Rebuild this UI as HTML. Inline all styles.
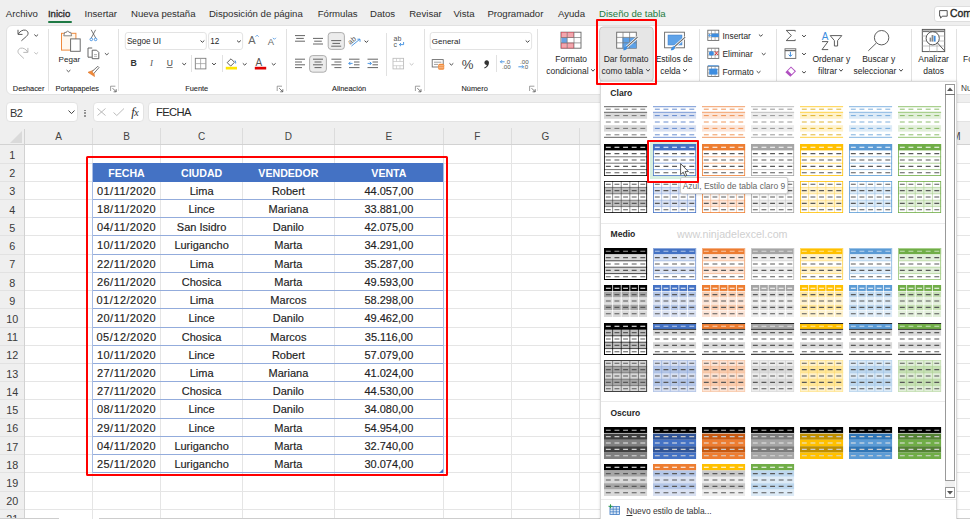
<!DOCTYPE html>
<html><head><meta charset="utf-8"><style>
html,body{margin:0;padding:0}
body{width:970px;height:519px;overflow:hidden;position:relative;background:#efefef;font-family:"Liberation Sans",sans-serif}
.t{position:absolute;line-height:1;white-space:nowrap}
.c{width:300px;text-align:center}
.r{position:absolute}
svg.r{overflow:visible}
</style></head><body>
<div class="t" style="left:5.8px;top:9.17px;font-size:9.6px;color:#2e2e2e;font-weight:normal;">Archivo</div><div class="t" style="left:47.9px;top:9.17px;font-size:9.6px;color:#1f1f1f;font-weight:normal;-webkit-text-stroke:0.3px #262626">Inicio</div><div class="t" style="left:84.5px;top:9.17px;font-size:9.6px;color:#2e2e2e;font-weight:normal;">Insertar</div><div class="t" style="left:131.0px;top:9.17px;font-size:9.6px;color:#2e2e2e;font-weight:normal;">Nueva pestaña</div><div class="t" style="left:208.9px;top:9.17px;font-size:9.6px;color:#2e2e2e;font-weight:normal;">Disposición de página</div><div class="t" style="left:317.7px;top:9.17px;font-size:9.6px;color:#2e2e2e;font-weight:normal;">Fórmulas</div><div class="t" style="left:370.0px;top:9.17px;font-size:9.6px;color:#2e2e2e;font-weight:normal;">Datos</div><div class="t" style="left:409.2px;top:9.17px;font-size:9.6px;color:#2e2e2e;font-weight:normal;">Revisar</div><div class="t" style="left:453.4px;top:9.17px;font-size:9.6px;color:#2e2e2e;font-weight:normal;">Vista</div><div class="t" style="left:487.4px;top:9.17px;font-size:9.6px;color:#2e2e2e;font-weight:normal;">Programador</div><div class="t" style="left:558.0px;top:9.17px;font-size:9.6px;color:#2e2e2e;font-weight:normal;">Ayuda</div><div class="t" style="left:599.0px;top:9.17px;font-size:9.6px;color:#1b7b3e;font-weight:normal;">Diseño de tabla</div><div class="r" style="left:48px;top:21px;width:24px;height:1.6px;background:#1f7a45;border-radius:1px"></div><div class="r" style="left:933.5px;top:5.5px;width:60px;height:16.5px;background:#fff;border:1px solid #dedede;border-radius:3px;box-sizing:border-box"></div><svg class="r" style="left:939px;top:10px" width="9" height="9" viewBox="0 0 9 9"><path d="M0.6 0.6H8.2V6.2H3.2L1.6 8.2V6.2H0.6Z" fill="none" stroke="#444" stroke-width="0.9"/></svg><div class="t" style="left:950.0px;top:8.80px;font-size:10.4px;color:#262626;font-weight:normal;-webkit-text-stroke:0.35px #262626">Com</div><div class="r" style="left:6px;top:24.5px;width:990px;height:70px;background:#fff;border:1px solid #e2e2e2;border-radius:6px;box-sizing:border-box"></div><div class="r" style="left:48px;top:28.5px;width:1px;height:62px;background:#e1e1e1"></div><div class="r" style="left:118.3px;top:28.5px;width:1px;height:62px;background:#e1e1e1"></div><div class="r" style="left:285.5px;top:28.5px;width:1px;height:62px;background:#e1e1e1"></div><div class="r" style="left:423.6px;top:28.5px;width:1px;height:62px;background:#e1e1e1"></div><div class="r" style="left:537.4px;top:28.5px;width:1px;height:62px;background:#e1e1e1"></div><div class="r" style="left:699px;top:28.5px;width:1px;height:62px;background:#e1e1e1"></div><div class="r" style="left:775.7px;top:28.5px;width:1px;height:62px;background:#e1e1e1"></div><div class="r" style="left:910.8px;top:28.5px;width:1px;height:62px;background:#e1e1e1"></div><div class="r" style="left:956px;top:28.5px;width:1px;height:62px;background:#e1e1e1"></div><div class="r" style="left:190.6px;top:55px;width:1px;height:17px;background:#e1e1e1"></div><div class="r" style="left:221.7px;top:55px;width:1px;height:17px;background:#e1e1e1"></div><div class="r" style="left:495.5px;top:55px;width:1px;height:17px;background:#e1e1e1"></div><div class="r" style="left:385.5px;top:32.5px;width:1px;height:43px;background:#e1e1e1"></div><div class="t" style="left:12.8px;top:84.74px;font-size:7.4px;color:#262626;font-weight:normal;-webkit-text-stroke:0.1px #262626">Deshacer</div><div class="t" style="left:55.5px;top:84.74px;font-size:7.4px;color:#262626;font-weight:normal;-webkit-text-stroke:0.1px #262626">Portapapeles</div><div class="t" style="left:185.2px;top:84.74px;font-size:7.4px;color:#262626;font-weight:normal;-webkit-text-stroke:0.1px #262626">Fuente</div><div class="t" style="left:332.0px;top:84.74px;font-size:7.4px;color:#262626;font-weight:normal;-webkit-text-stroke:0.1px #262626">Alineación</div><div class="t" style="left:461.5px;top:84.74px;font-size:7.4px;color:#262626;font-weight:normal;-webkit-text-stroke:0.1px #262626">Número</div><div class="t" style="left:961.0px;top:84.37px;font-size:8.3px;color:#3d3d3d;font-weight:normal;">Nu</div><svg class="r" style="left:0;top:0" width="970" height="100" viewBox="0 0 970 100"><path d="M18.3 34 C20 31, 23 29.6, 25.5 30.2 C28.6 31.1, 28.8 34.4, 26.6 36.2 L21.4 40.8" fill="none" stroke="#505050" stroke-width="0.95"/><path d="M18 29.8V34.4H22.5" fill="none" stroke="#505050" stroke-width="0.95"/><path d="M34.30 34.55L36.20 36.25L38.10 34.55" fill="none" stroke="#505050" stroke-width="1.0"/><path d="M27.6 52 C26 49, 23 47.6, 20.6 48.2 C17.6 49.2, 17.2 52.3, 19.3 54.2 L23.9 58.5" fill="none" stroke="#b5b5b5" stroke-width="0.95"/><path d="M27.9 47.9V52.4H23.3" fill="none" stroke="#b5b5b5" stroke-width="0.95"/><path d="M34.30 52.35L36.20 54.05L38.10 52.35" fill="none" stroke="#c0c0c0" stroke-width="1.0"/><rect x="61.5" y="33.3" width="14.4" height="16.8" fill="#fff8ee" stroke="#ee8a3c" stroke-width="1"/><path d="M63.8 35.8L64.6 32.4H66.4A1.3 1.3 0 0 1 69 32.4H70.8L71.6 35.8Z" fill="#fff" stroke="#777" stroke-width="0.9"/><rect x="70.6" y="38.9" width="9.6" height="12.4" fill="#fff" stroke="#666" stroke-width="0.95"/><path d="M66.60 70.05L68.50 71.75L70.40 70.05" fill="none" stroke="#555" stroke-width="1.0"/><path d="M91.2 29.8L95.8 38.2M95.6 29.8L91.2 38.2" stroke="#555" stroke-width="0.8"/><circle cx="91.3" cy="39.4" r="1.3" fill="none" stroke="#3d8de0" stroke-width="0.9"/><circle cx="95.6" cy="39.4" r="1.3" fill="none" stroke="#3d8de0" stroke-width="0.9"/><path d="M91.8 57.2H88V48H92.2" fill="none" stroke="#555" stroke-width="0.9"/><path d="M92.2 50.2H96.6L98.8 52.4V58.7H92.2Z" fill="#fff" stroke="#555" stroke-width="0.9"/><path d="M94 54.5H97M94 56.3H97" stroke="#888" stroke-width="0.6"/><path d="M104.90 53.15L106.80 54.85L108.70 53.15" fill="none" stroke="#555" stroke-width="1.0"/><path d="M88 72.3L93.6 70.2L94.5 76.5Z" fill="#f08a3a" stroke="#e07020" stroke-width="0.6"/><path d="M92.2 71.4L97.8 66.3L99 67.6L93.9 73.4" fill="#fff" stroke="#555" stroke-width="0.8"/><rect x="125.3" y="32.5" width="81" height="17" rx="2.5" fill="#fff" stroke="#e0e0e0" stroke-width="0.9"/><path d="M200.50 40.55L202.40 42.25L204.30 40.55" fill="none" stroke="#444" stroke-width="1.0"/><rect x="208.6" y="32.5" width="34" height="17" rx="2.5" fill="#fff" stroke="#e0e0e0" stroke-width="0.9"/><path d="M237.00 40.55L238.90 42.25L240.80 40.55" fill="none" stroke="#444" stroke-width="1.0"/><path d="M256.4 33.8L257.8 35.2M257.8 33.8" stroke="#3d8de0" stroke-width="0" /><path d="M255.6 36.7L257.1 35.2L258.6 36.7" fill="none" stroke="#3d8de0" stroke-width="0.8"/><path d="M272.9 37.8L274.4 39.3L275.9 37.8" fill="none" stroke="#3d8de0" stroke-width="0.8"/><path d="M182.30 63.15L184.20 64.85L186.10 63.15" fill="none" stroke="#444" stroke-width="1.0"/><path d="M166.6 67.5H172.6" stroke="#444" stroke-width="0.7"/><rect x="195.3" y="58.3" width="10.6" height="10.6" fill="none" stroke="#777" stroke-width="0.85"/><path d="M200.6 58.3V68.9M195.3 63.6H205.9" stroke="#999" stroke-width="0.7"/><path d="M212.10 63.15L214.00 64.85L215.90 63.15" fill="none" stroke="#444" stroke-width="1.0"/><path d="M227.2 62.6L231 58.8L234.5 62.3L230.7 66.1Z" fill="#fff" stroke="#444" stroke-width="0.85"/><path d="M235 60.5 q1.2 1.6 0.6 3" fill="none" stroke="#3d8de0" stroke-width="0.9"/><rect x="225.8" y="66.8" width="11.2" height="2.7" fill="#ffe600"/><path d="M242.80 63.35L244.70 65.05L246.60 63.35" fill="none" stroke="#444" stroke-width="1.0"/><rect x="254.8" y="66.8" width="11.4" height="2.7" fill="#e00000"/><path d="M271.80 63.35L273.70 65.05L275.60 63.35" fill="none" stroke="#444" stroke-width="1.0"/><path d="M110.6 91V86.2H115.39999999999999" fill="none" stroke="#777" stroke-width="0.7"/><path d="M112.6 88.2L116.19999999999999 91.8M116.19999999999999 89.2V91.8H113.6" fill="none" stroke="#555" stroke-width="0.8"/><path d="M277.2 91V86.2H282.0" fill="none" stroke="#777" stroke-width="0.7"/><path d="M279.2 88.2L282.8 91.8M282.8 89.2V91.8H280.2" fill="none" stroke="#555" stroke-width="0.8"/><path d="M415.4 91V86.2H420.2" fill="none" stroke="#777" stroke-width="0.7"/><path d="M417.4 88.2L421.0 91.8M421.0 89.2V91.8H418.4" fill="none" stroke="#555" stroke-width="0.8"/><path d="M529.6 91V86.2H534.4" fill="none" stroke="#777" stroke-width="0.7"/><path d="M531.6 88.2L535.2 91.8M535.2 89.2V91.8H532.6" fill="none" stroke="#555" stroke-width="0.8"/><path d="M295.00 35.60h10.00" stroke="#555" stroke-width="0.9"/><path d="M296.20 38.40h7.60" stroke="#555" stroke-width="0.9"/><path d="M295.00 41.20h10.00" stroke="#555" stroke-width="0.9"/><path d="M313.00 38.40h10.00" stroke="#555" stroke-width="0.9"/><path d="M314.20 41.20h7.60" stroke="#555" stroke-width="0.9"/><path d="M313.00 44.00h10.00" stroke="#555" stroke-width="0.9"/><rect x="328.2" y="32.6" width="16.2" height="16.8" rx="3" fill="#ececec" stroke="#9a9a9a" stroke-width="0.8"/><path d="M331.20 40.60h10.00" stroke="#555" stroke-width="0.9"/><path d="M332.40 43.40h7.60" stroke="#555" stroke-width="0.9"/><path d="M331.20 46.20h10.00" stroke="#555" stroke-width="0.9"/><text x="348.2" y="43" font-size="7.4" fill="#555" font-family="Liberation Sans" transform="rotate(-40 352 41)">ab</text><path d="M351.5 46L359.8 39.2M357.4 39.2H360V41.8" fill="none" stroke="#3d8de0" stroke-width="0.9"/><path d="M364.50 40.65L366.40 42.35L368.30 40.65" fill="none" stroke="#444" stroke-width="1.0"/><path d="M295.00 59.20h10.00" stroke="#555" stroke-width="0.9"/><path d="M295.00 62.00h7.00" stroke="#555" stroke-width="0.9"/><path d="M295.00 64.80h10.00" stroke="#555" stroke-width="0.9"/><path d="M295.00 67.60h7.00" stroke="#555" stroke-width="0.9"/><rect x="309.6" y="55.6" width="16.8" height="16.6" rx="3" fill="#ececec" stroke="#9a9a9a" stroke-width="0.8"/><path d="M313.00 59.20h10.00" stroke="#555" stroke-width="0.9"/><path d="M314.50 62.00h7.00" stroke="#555" stroke-width="0.9"/><path d="M313.00 64.80h10.00" stroke="#555" stroke-width="0.9"/><path d="M314.50 67.60h7.00" stroke="#555" stroke-width="0.9"/><path d="M331.40 59.20h10.00" stroke="#555" stroke-width="0.9"/><path d="M334.40 62.00h7.00" stroke="#555" stroke-width="0.9"/><path d="M331.40 64.80h10.00" stroke="#555" stroke-width="0.9"/><path d="M334.40 67.60h7.00" stroke="#555" stroke-width="0.9"/><path d="M349.00 59.20h10.50" stroke="#555" stroke-width="0.9"/><path d="M354.00 62.00h5.50" stroke="#555" stroke-width="0.9"/><path d="M354.00 64.80h5.50" stroke="#555" stroke-width="0.9"/><path d="M349.00 67.60h10.50" stroke="#555" stroke-width="0.9"/><path d="M352.6 63.4H348.8M350.4 61.8L348.8 63.4L350.4 65" fill="none" stroke="#3d8de0" stroke-width="0.9"/><path d="M367.50 59.20h10.50" stroke="#555" stroke-width="0.9"/><path d="M372.50 62.00h5.50" stroke="#555" stroke-width="0.9"/><path d="M372.50 64.80h5.50" stroke="#555" stroke-width="0.9"/><path d="M367.50 67.60h10.50" stroke="#555" stroke-width="0.9"/><path d="M367.6 63.4H371.4M369.8 61.8L371.4 63.4L369.8 65" fill="none" stroke="#3d8de0" stroke-width="0.9"/><text x="393.6" y="41.2" font-size="7" fill="#555" font-family="Liberation Sans">ab</text><text x="393.6" y="46.8" font-size="7" fill="#555" font-family="Liberation Sans">c</text><path d="M403.6 42V44.6H399.4M401 43L399.4 44.6L401 46.2" fill="none" stroke="#3d8de0" stroke-width="0.9"/><rect x="393" y="58.3" width="10.6" height="10.6" fill="none" stroke="#bbb" stroke-width="0.85"/><path d="M393 61.5H403.6M393 65.7H403.6M396.5 58.3V61.5M400 58.3V61.5M396.5 65.7V68.9M400 65.7V68.9" stroke="#c4c4c4" stroke-width="0.7"/><path d="M409.70 63.35L411.60 65.05L413.50 63.35" fill="none" stroke="#c4c4c4" stroke-width="1.0"/><rect x="430.2" y="32.5" width="101.4" height="17" rx="2.5" fill="#fff" stroke="#e0e0e0" stroke-width="0.9"/><path d="M525.70 40.55L527.60 42.25L529.50 40.55" fill="none" stroke="#444" stroke-width="1.0"/><rect x="432.2" y="59.6" width="11" height="7.4" fill="#fff" stroke="#666" stroke-width="0.85"/><path d="M434 62.2H441.4M434 64.4H438" stroke="#777" stroke-width="0.7"/><rect x="438.2" y="63.8" width="6" height="6" rx="1.5" fill="#f08a3a"/><path d="M438.8 65.8H443.6M438.8 67.8H443.6" stroke="#fff" stroke-width="0.5"/><path d="M449.50 63.35L451.40 65.05L453.30 63.35" fill="none" stroke="#444" stroke-width="1.0"/><text x="505" y="63.8" font-size="6.2" fill="#555" font-family="Liberation Sans">.0</text><text x="502" y="69" font-size="6.2" fill="#555" font-family="Liberation Sans">.00</text><path d="M504.6 61.8H500.4M501.9 60.3L500.4 61.8L501.9 63.3" fill="none" stroke="#3d8de0" stroke-width="0.9"/><text x="520" y="63.8" font-size="6.2" fill="#555" font-family="Liberation Sans">.00</text><text x="523" y="69" font-size="6.2" fill="#555" font-family="Liberation Sans">.0</text><path d="M518.4 66.8H523.6M522.1 65.3L523.6 66.8L522.1 68.3" fill="none" stroke="#3d8de0" stroke-width="0.9"/><rect x="561" y="32.2" width="20" height="16" fill="#fff" stroke="#666" stroke-width="0.9"/><rect x="561.5" y="32.6" width="12.2" height="5" fill="#f4a6ad" stroke="#e05060" stroke-width="0.6"/><rect x="561.5" y="43" width="12.2" height="5" fill="#f4a6ad" stroke="#e05060" stroke-width="0.6"/><rect x="561.5" y="37.8" width="5.6" height="5.2" fill="#6aa4e4"/><path d="M561 37.5H581M561 42.9H581M567.2 32.2V48.2M574 32.2V48.2" stroke="#777" stroke-width="0.7"/><rect x="599.6" y="27" width="53.6" height="54.5" rx="3.5" fill="#e6e6e6" stroke="#c4c4c4" stroke-width="0.9"/><rect x="616.7" y="32.2" width="19.6" height="16" fill="#fff" stroke="#666" stroke-width="0.9"/><rect x="622.4" y="37.4" width="14" height="10.8" fill="#5ea2e8"/><path d="M616.7 37.4H636.3M616.7 42.8H636.3M623 32.2V48.2M629.6 32.2V48.2" stroke="#777" stroke-width="0.7"/><path d="M637.6 37.2L626.2 47.4" stroke="#fff" stroke-width="2.6"/><path d="M637.6 37.2L626.2 47.4" stroke="#666" stroke-width="1.1"/><path d="M627.4 46.2C624.6 45.8 623.6 48 623.2 50.2C625.6 50.4 627.8 49.4 627.4 46.2Z" fill="#3d8de0"/><rect x="664.6" y="32.2" width="19.8" height="15.6" fill="#fff" stroke="#666" stroke-width="0.9"/><rect x="668" y="35" width="14" height="10" fill="#5ea2e8" stroke="#3d7cc8" stroke-width="0.5"/><path d="M685.2 37.2L673.8 47.4" stroke="#fff" stroke-width="2.6"/><path d="M685.2 37.2L673.8 47.4" stroke="#666" stroke-width="1.1"/><path d="M675 46.2C672.2 45.8 671.2 48 670.8 50.2C673.2 50.4 675.4 49.4 675 46.2Z" fill="#3d8de0"/><rect x="707.8" y="30.2" width="11" height="10.2" fill="#fff" stroke="#666" stroke-width="0.85"/><path d="M707.8 33.6H718.8M707.8 37.0H718.8M711.5 30.2V40.4M715.1 30.2V40.4" stroke="#888" stroke-width="0.6"/><rect x="711.5" y="33.6" width="7.3" height="3.4" fill="#3d8de0"/><path d="M713 35.3H708.6M710 34.0L708.6 35.3L710 36.6" fill="none" stroke="#3d8de0" stroke-width="0.9"/><rect x="707.8" y="48.2" width="11" height="10.2" fill="#fff" stroke="#666" stroke-width="0.85"/><path d="M707.8 51.6H718.8M707.8 55.0H718.8M711.5 48.2V58.400000000000006M715.1 48.2V58.400000000000006" stroke="#888" stroke-width="0.6"/><rect x="709" y="51.2" width="4.8" height="4.4" rx="1.5" fill="#3d8de0"/><path d="M715 51.400000000000006L718 55.0M718 51.400000000000006L715 55.0" stroke="#e02020" stroke-width="0.9"/><rect x="707.8" y="66.2" width="11" height="10.2" fill="#fff" stroke="#666" stroke-width="0.85"/><path d="M707.8 69.60000000000001H718.8M707.8 73.0H718.8M711.5 66.2V76.4M715.1 66.2V76.4" stroke="#888" stroke-width="0.6"/><rect x="709.2" y="68.60000000000001" width="8.2" height="6" fill="#3d8de0"/><path d="M708 65.8H718.6" stroke="#3d8de0" stroke-width="0.9"/><path d="M758.90 34.55L760.80 36.25L762.70 34.55" fill="none" stroke="#444" stroke-width="1.0"/><path d="M761.80 53.15L763.70 54.85L765.60 53.15" fill="none" stroke="#444" stroke-width="1.0"/><path d="M756.70 71.15L758.60 72.85L760.50 71.15" fill="none" stroke="#444" stroke-width="1.0"/><path d="M795.2 31.6V30.4H786.2L791.4 35.5L786.2 40.6H795.2V39.4" fill="none" stroke="#555" stroke-width="0.95"/><path d="M802.10 35.15L804.00 36.85L805.90 35.15" fill="none" stroke="#444" stroke-width="1.0"/><rect x="785" y="48.8" width="10.8" height="9.6" fill="#fff" stroke="#666" stroke-width="0.9"/><path d="M785 50.6H795.8" stroke="#666" stroke-width="1.2"/><path d="M790.4 51.8V56.2M788.6 54.6L790.4 56.4L792.2 54.6" fill="none" stroke="#3d8de0" stroke-width="1"/><path d="M802.10 53.15L804.00 54.85L805.90 53.15" fill="none" stroke="#444" stroke-width="1.0"/><path d="M791 66.6L796 71.2L790.4 76.8L785.4 72.2Z" fill="#b04fc0"/><path d="M791 67.8L794.6 71.2L791.6 74.2L788 70.8Z" fill="#fff"/><path d="M802.10 71.35L804.00 73.05L805.90 71.35" fill="none" stroke="#444" stroke-width="1.0"/><text x="821.8" y="39.6" font-size="10" fill="#3d8de0" font-family="Liberation Sans">A</text><path d="M822 41.6H828L822 49.6H828.2" fill="none" stroke="#555" stroke-width="0.95"/><path d="M830.2 35.6H841.8L837.6 40.6V46H834.4V40.6Z" fill="#fff" stroke="#555" stroke-width="0.95" stroke-linejoin="round"/><circle cx="881.6" cy="37.7" r="7.2" fill="none" stroke="#555" stroke-width="0.95"/><path d="M876.4 43L868.3 50.8" stroke="#555" stroke-width="0.95"/><rect x="922.3" y="29.4" width="22.4" height="22.2" fill="#fff" stroke="#555" stroke-width="0.95"/><path d="M922.3 31.3H944.7" stroke="#777" stroke-width="1.6"/><path d="M922.3 36H944.7M922.3 41H944.7M922.3 46H944.7M929.5 31V51.6M937 31V51.6" stroke="#aaa" stroke-width="0.7"/><circle cx="932.7" cy="38.3" r="6.6" fill="#fff" stroke="#555" stroke-width="1"/><path d="M937.2 42.6L944.5 50.8" stroke="#555" stroke-width="1"/><rect x="929.6" y="37.6" width="1.6" height="4" fill="#888"/><rect x="931.6" y="35" width="1.8" height="6.6" fill="#888"/><rect x="933.8" y="35.8" width="1.8" height="5.8" fill="#3d8de0"/></svg><div class="t" style="left:58.6px;top:56.44px;font-size:8.1px;color:#262626;font-weight:normal;">Pegar</div><div class="t" style="left:126.9px;top:37.66px;font-size:8.2px;color:#262626;font-weight:normal;">Segoe UI</div><div class="t" style="left:210.2px;top:37.86px;font-size:8.2px;color:#262626;font-weight:normal;">12</div><div class="t" style="left:248.2px;top:35.49px;font-size:11px;color:#666;font-weight:normal;">A</div><div class="t" style="left:267.8px;top:36.84px;font-size:9.4px;color:#666;font-weight:normal;">A</div><div class="t" style="left:130.5px;top:59.35px;font-size:8.8px;color:#333;font-weight:bold;">B</div><div class="t" style="left:150.0px;top:59.18px;font-size:9px;color:#555;font-weight:normal;font-family:'Liberation Serif',serif"><i>I</i></div><div class="t" style="left:166.8px;top:59.20px;font-size:8.5px;color:#444;font-weight:normal;">U</div><div class="t" style="left:255.4px;top:57.53px;font-size:10px;color:#555;font-weight:normal;">A</div><div class="t" style="left:431.8px;top:37.83px;font-size:8px;color:#262626;font-weight:normal;">General</div><div class="t" style="left:461.8px;top:57.73px;font-size:13.2px;color:#444;font-weight:normal;">%</div><svg class="r" style="left:482px;top:58px" width="8" height="12" viewBox="0 0 8 12"><path d="M4.6 2.2C6.4 2.2 7 3.6 7 4.8C7 7.4 5.2 9.6 2.6 10.4L2.2 9.6C3.8 8.8 4.6 7.8 4.8 6.9C3.4 6.9 2.4 6 2.4 4.6C2.4 3.2 3.4 2.2 4.6 2.2Z" fill="#333"/></svg><div class="t c" style="left:421.2px;top:54.80px;font-size:8.5px;color:#262626;font-weight:normal;">Formato</div><div class="t c" style="left:421.2px;top:66.80px;font-size:8.5px;color:#262626;font-weight:normal;">condicional<svg width="6" height="5" style="margin-left:1.5px;vertical-align:1px" viewBox="0 0 6 5"><path d="M1.2 1.2L3 3.2L4.8 1.2" fill="none" stroke="#444" stroke-width="1"/></svg></div><div class="t c" style="left:476.1px;top:54.80px;font-size:8.5px;color:#262626;font-weight:normal;">Dar formato</div><div class="t c" style="left:476.1px;top:66.80px;font-size:8.5px;color:#262626;font-weight:normal;">como tabla<svg width="6" height="5" style="margin-left:1.5px;vertical-align:1px" viewBox="0 0 6 5"><path d="M1.2 1.2L3 3.2L4.8 1.2" fill="none" stroke="#444" stroke-width="1"/></svg></div><div class="t c" style="left:524.1px;top:54.80px;font-size:8.5px;color:#262626;font-weight:normal;">Estilos de</div><div class="t c" style="left:524.1px;top:66.80px;font-size:8.5px;color:#262626;font-weight:normal;">celda<svg width="6" height="5" style="margin-left:1.5px;vertical-align:1px" viewBox="0 0 6 5"><path d="M1.2 1.2L3 3.2L4.8 1.2" fill="none" stroke="#444" stroke-width="1"/></svg></div><div class="t c" style="left:681.3px;top:54.80px;font-size:8.5px;color:#262626;font-weight:normal;">Ordenar y</div><div class="t c" style="left:681.3px;top:66.80px;font-size:8.5px;color:#262626;font-weight:normal;">filtrar<svg width="6" height="5" style="margin-left:1.5px;vertical-align:1px" viewBox="0 0 6 5"><path d="M1.2 1.2L3 3.2L4.8 1.2" fill="none" stroke="#444" stroke-width="1"/></svg></div><div class="t c" style="left:728.7px;top:54.80px;font-size:8.5px;color:#262626;font-weight:normal;">Buscar y</div><div class="t c" style="left:728.7px;top:66.80px;font-size:8.5px;color:#262626;font-weight:normal;">seleccionar<svg width="6" height="5" style="margin-left:1.5px;vertical-align:1px" viewBox="0 0 6 5"><path d="M1.2 1.2L3 3.2L4.8 1.2" fill="none" stroke="#444" stroke-width="1"/></svg></div><div class="t c" style="left:783.6px;top:54.80px;font-size:8.5px;color:#262626;font-weight:normal;">Analizar</div><div class="t c" style="left:783.6px;top:66.80px;font-size:8.5px;color:#262626;font-weight:normal;">datos</div><div class="t" style="left:722.5px;top:32.19px;font-size:8.4px;color:#262626;font-weight:normal;">Insertar</div><div class="t" style="left:722.5px;top:50.29px;font-size:8.4px;color:#262626;font-weight:normal;">Eliminar</div><div class="t" style="left:722.5px;top:67.69px;font-size:8.4px;color:#262626;font-weight:normal;">Formato</div><div class="t" style="left:963.0px;top:54.80px;font-size:8.5px;color:#262626;font-weight:normal;">Fo</div><div class="r" style="left:6px;top:101.5px;width:71.5px;height:20.7px;background:#fff;border:1px solid #e3e3e3;border-radius:4px;box-sizing:border-box"></div><div class="t" style="left:9.9px;top:107.79px;font-size:11px;color:#333;font-weight:normal;letter-spacing:-0.5px">B2</div><svg class="r" style="left:67.5px;top:109.8px" width="7" height="4.5" viewBox="0 0 7 4.5"><path d="M0.5 0.5L3.5 3.6L6.5 0.5" fill="none" stroke="#444" stroke-width="1"/></svg><div class="r" style="left:84.4px;top:109.5px;width:1.5px;height:1.5px;background:#777;border-radius:1px"></div><div class="r" style="left:84.4px;top:112.3px;width:1.5px;height:1.5px;background:#777;border-radius:1px"></div><div class="r" style="left:84.4px;top:115.1px;width:1.5px;height:1.5px;background:#777;border-radius:1px"></div><div class="r" style="left:93px;top:101.7px;width:51.2px;height:20.5px;background:#fff;border:1px solid #e3e3e3;border-radius:4px;box-sizing:border-box"></div><svg class="r" style="left:97px;top:108px" width="9" height="8" viewBox="0 0 9 8"><path d="M0.5 0.5L8.5 7.5M8.5 0.5L0.5 7.5" stroke="#aaa" stroke-width="0.8"/></svg><svg class="r" style="left:112.5px;top:108px" width="11.5" height="8" viewBox="0 0 11.5 8"><path d="M0.5 4.5L3.8 7.5L11 0.5" fill="none" stroke="#aaa" stroke-width="0.8"/></svg><div class="t" style="left:131.2px;top:106.42px;font-size:12.5px;color:#2a2a2a;font-weight:normal;font-family:'Liberation Serif',serif"><i>f</i><span style="font-size:10px;font-style:italic;margin-left:-0.5px">x</span></div><div class="r" style="left:148px;top:101.8px;width:830px;height:20.4px;background:#fff;border:1px solid #e3e3e3;border-radius:4px;box-sizing:border-box"></div><div class="t" style="left:156.0px;top:106.52px;font-size:11.2px;color:#262626;font-weight:normal;letter-spacing:-0.6px">FECHA</div><div class="r" style="left:24.5px;top:145px;width:950px;height:380px;background:#fff"></div><div class="r" style="left:0px;top:144px;width:970px;height:1.4px;background:#d2d2d2"></div><svg class="r" style="left:9px;top:130px" width="14" height="14" viewBox="0 0 14 14"><path d="M13 1V13H1Z" fill="#dadada"/></svg><div class="r" style="left:91.9px;top:128px;width:1px;height:16px;background:#dcdcdc"></div><div class="r" style="left:160.2px;top:128px;width:1px;height:16px;background:#dcdcdc"></div><div class="r" style="left:241.9px;top:128px;width:1px;height:16px;background:#dcdcdc"></div><div class="r" style="left:334.0px;top:128px;width:1px;height:16px;background:#dcdcdc"></div><div class="r" style="left:442.8px;top:128px;width:1px;height:16px;background:#dcdcdc"></div><div class="r" style="left:510.8px;top:128px;width:1px;height:16px;background:#dcdcdc"></div><div class="r" style="left:579.3px;top:128px;width:1px;height:16px;background:#dcdcdc"></div><div class="r" style="left:647.8px;top:128px;width:1px;height:16px;background:#dcdcdc"></div><div class="r" style="left:716.3px;top:128px;width:1px;height:16px;background:#dcdcdc"></div><div class="r" style="left:784.8px;top:128px;width:1px;height:16px;background:#dcdcdc"></div><div class="r" style="left:853.3px;top:128px;width:1px;height:16px;background:#dcdcdc"></div><div class="r" style="left:921.8px;top:128px;width:1px;height:16px;background:#dcdcdc"></div><div class="r" style="left:990.3px;top:128px;width:1px;height:16px;background:#dcdcdc"></div><div class="r" style="left:24px;top:129px;width:1px;height:400px;background:#d2d2d2"></div><div class="r" style="left:91.9px;top:145px;width:1px;height:380px;background:#e5e5e5"></div><div class="r" style="left:160.2px;top:145px;width:1px;height:380px;background:#e5e5e5"></div><div class="r" style="left:241.9px;top:145px;width:1px;height:380px;background:#e5e5e5"></div><div class="r" style="left:334.0px;top:145px;width:1px;height:380px;background:#e5e5e5"></div><div class="r" style="left:442.8px;top:145px;width:1px;height:380px;background:#e5e5e5"></div><div class="r" style="left:510.8px;top:145px;width:1px;height:380px;background:#e5e5e5"></div><div class="r" style="left:579.3px;top:145px;width:1px;height:380px;background:#e5e5e5"></div><div class="r" style="left:647.8px;top:145px;width:1px;height:380px;background:#e5e5e5"></div><div class="r" style="left:716.3px;top:145px;width:1px;height:380px;background:#e5e5e5"></div><div class="r" style="left:784.8px;top:145px;width:1px;height:380px;background:#e5e5e5"></div><div class="r" style="left:853.3px;top:145px;width:1px;height:380px;background:#e5e5e5"></div><div class="r" style="left:921.8px;top:145px;width:1px;height:380px;background:#e5e5e5"></div><div class="r" style="left:990.3px;top:145px;width:1px;height:380px;background:#e5e5e5"></div><div class="r" style="left:0px;top:162.5px;width:24px;height:1px;background:#e2e2e2"></div><div class="r" style="left:24.5px;top:162.5px;width:950px;height:1px;background:#e5e5e5"></div><div class="r" style="left:0px;top:180.7px;width:24px;height:1px;background:#e2e2e2"></div><div class="r" style="left:24.5px;top:180.7px;width:950px;height:1px;background:#e5e5e5"></div><div class="r" style="left:0px;top:198.9px;width:24px;height:1px;background:#e2e2e2"></div><div class="r" style="left:24.5px;top:198.9px;width:950px;height:1px;background:#e5e5e5"></div><div class="r" style="left:0px;top:217.2px;width:24px;height:1px;background:#e2e2e2"></div><div class="r" style="left:24.5px;top:217.2px;width:950px;height:1px;background:#e5e5e5"></div><div class="r" style="left:0px;top:235.4px;width:24px;height:1px;background:#e2e2e2"></div><div class="r" style="left:24.5px;top:235.4px;width:950px;height:1px;background:#e5e5e5"></div><div class="r" style="left:0px;top:253.6px;width:24px;height:1px;background:#e2e2e2"></div><div class="r" style="left:24.5px;top:253.6px;width:950px;height:1px;background:#e5e5e5"></div><div class="r" style="left:0px;top:271.8px;width:24px;height:1px;background:#e2e2e2"></div><div class="r" style="left:24.5px;top:271.8px;width:950px;height:1px;background:#e5e5e5"></div><div class="r" style="left:0px;top:290.0px;width:24px;height:1px;background:#e2e2e2"></div><div class="r" style="left:24.5px;top:290.0px;width:950px;height:1px;background:#e5e5e5"></div><div class="r" style="left:0px;top:308.3px;width:24px;height:1px;background:#e2e2e2"></div><div class="r" style="left:24.5px;top:308.3px;width:950px;height:1px;background:#e5e5e5"></div><div class="r" style="left:0px;top:326.5px;width:24px;height:1px;background:#e2e2e2"></div><div class="r" style="left:24.5px;top:326.5px;width:950px;height:1px;background:#e5e5e5"></div><div class="r" style="left:0px;top:344.7px;width:24px;height:1px;background:#e2e2e2"></div><div class="r" style="left:24.5px;top:344.7px;width:950px;height:1px;background:#e5e5e5"></div><div class="r" style="left:0px;top:362.9px;width:24px;height:1px;background:#e2e2e2"></div><div class="r" style="left:24.5px;top:362.9px;width:950px;height:1px;background:#e5e5e5"></div><div class="r" style="left:0px;top:381.1px;width:24px;height:1px;background:#e2e2e2"></div><div class="r" style="left:24.5px;top:381.1px;width:950px;height:1px;background:#e5e5e5"></div><div class="r" style="left:0px;top:399.4px;width:24px;height:1px;background:#e2e2e2"></div><div class="r" style="left:24.5px;top:399.4px;width:950px;height:1px;background:#e5e5e5"></div><div class="r" style="left:0px;top:417.6px;width:24px;height:1px;background:#e2e2e2"></div><div class="r" style="left:24.5px;top:417.6px;width:950px;height:1px;background:#e5e5e5"></div><div class="r" style="left:0px;top:435.8px;width:24px;height:1px;background:#e2e2e2"></div><div class="r" style="left:24.5px;top:435.8px;width:950px;height:1px;background:#e5e5e5"></div><div class="r" style="left:0px;top:454.0px;width:24px;height:1px;background:#e2e2e2"></div><div class="r" style="left:24.5px;top:454.0px;width:950px;height:1px;background:#e5e5e5"></div><div class="r" style="left:0px;top:472.2px;width:24px;height:1px;background:#e2e2e2"></div><div class="r" style="left:24.5px;top:472.2px;width:950px;height:1px;background:#e5e5e5"></div><div class="r" style="left:0px;top:490.5px;width:24px;height:1px;background:#e2e2e2"></div><div class="r" style="left:24.5px;top:490.5px;width:950px;height:1px;background:#e5e5e5"></div><div class="r" style="left:0px;top:508.7px;width:24px;height:1px;background:#e2e2e2"></div><div class="r" style="left:24.5px;top:508.7px;width:950px;height:1px;background:#e5e5e5"></div><div class="r" style="left:0px;top:526.9px;width:24px;height:1px;background:#e2e2e2"></div><div class="r" style="left:24.5px;top:526.9px;width:950px;height:1px;background:#e5e5e5"></div><div class="t c" style="left:-91.5px;top:131.63px;font-size:10px;color:#444;font-weight:normal;">A</div><div class="t c" style="left:-23.5px;top:131.63px;font-size:10px;color:#444;font-weight:normal;">B</div><div class="t c" style="left:51.6px;top:131.63px;font-size:10px;color:#444;font-weight:normal;">C</div><div class="t c" style="left:138.4px;top:131.63px;font-size:10px;color:#444;font-weight:normal;">D</div><div class="t c" style="left:238.9px;top:131.63px;font-size:10px;color:#444;font-weight:normal;">E</div><div class="t c" style="left:327.3px;top:131.63px;font-size:10px;color:#444;font-weight:normal;">F</div><div class="t c" style="left:395.5px;top:131.63px;font-size:10px;color:#444;font-weight:normal;">G</div><div class="t c" style="left:464.0px;top:131.63px;font-size:10px;color:#444;font-weight:normal;">H</div><div class="t c" style="left:532.5px;top:131.63px;font-size:10px;color:#444;font-weight:normal;">I</div><div class="t c" style="left:601.0px;top:131.63px;font-size:10px;color:#444;font-weight:normal;">J</div><div class="t c" style="left:669.5px;top:131.63px;font-size:10px;color:#444;font-weight:normal;">K</div><div class="t c" style="left:738.0px;top:131.63px;font-size:10px;color:#444;font-weight:normal;">L</div><div class="t c" style="left:806.5px;top:131.63px;font-size:10px;color:#444;font-weight:normal;">M</div><div class="t c" style="left:-137.7px;top:150.04px;font-size:10.8px;color:#3a3a3a;font-weight:normal;">1</div><div class="t c" style="left:-137.7px;top:168.26px;font-size:10.8px;color:#3a3a3a;font-weight:normal;">2</div><div class="t c" style="left:-137.7px;top:186.48px;font-size:10.8px;color:#3a3a3a;font-weight:normal;">3</div><div class="t c" style="left:-137.7px;top:204.70px;font-size:10.8px;color:#3a3a3a;font-weight:normal;">4</div><div class="t c" style="left:-137.7px;top:222.92px;font-size:10.8px;color:#3a3a3a;font-weight:normal;">5</div><div class="t c" style="left:-137.7px;top:241.14px;font-size:10.8px;color:#3a3a3a;font-weight:normal;">6</div><div class="t c" style="left:-137.7px;top:259.36px;font-size:10.8px;color:#3a3a3a;font-weight:normal;">7</div><div class="t c" style="left:-137.7px;top:277.58px;font-size:10.8px;color:#3a3a3a;font-weight:normal;">8</div><div class="t c" style="left:-137.7px;top:295.80px;font-size:10.8px;color:#3a3a3a;font-weight:normal;">9</div><div class="t c" style="left:-137.7px;top:314.02px;font-size:10.8px;color:#3a3a3a;font-weight:normal;">10</div><div class="t c" style="left:-137.7px;top:332.24px;font-size:10.8px;color:#3a3a3a;font-weight:normal;">11</div><div class="t c" style="left:-137.7px;top:350.46px;font-size:10.8px;color:#3a3a3a;font-weight:normal;">12</div><div class="t c" style="left:-137.7px;top:368.68px;font-size:10.8px;color:#3a3a3a;font-weight:normal;">13</div><div class="t c" style="left:-137.7px;top:386.90px;font-size:10.8px;color:#3a3a3a;font-weight:normal;">14</div><div class="t c" style="left:-137.7px;top:405.12px;font-size:10.8px;color:#3a3a3a;font-weight:normal;">15</div><div class="t c" style="left:-137.7px;top:423.34px;font-size:10.8px;color:#3a3a3a;font-weight:normal;">16</div><div class="t c" style="left:-137.7px;top:441.56px;font-size:10.8px;color:#3a3a3a;font-weight:normal;">17</div><div class="t c" style="left:-137.7px;top:459.78px;font-size:10.8px;color:#3a3a3a;font-weight:normal;">18</div><div class="t c" style="left:-137.7px;top:478.00px;font-size:10.8px;color:#3a3a3a;font-weight:normal;">19</div><div class="t c" style="left:-137.7px;top:496.22px;font-size:10.8px;color:#3a3a3a;font-weight:normal;">20</div><div class="t c" style="left:-137.7px;top:514.44px;font-size:10.8px;color:#3a3a3a;font-weight:normal;">21</div><div class="r" style="left:92.4px;top:163px;width:350.9px;height:18.6px;background:#4472c4"></div><div class="t c" style="left:-23.5px;top:167.63px;font-size:10.6px;color:#fff;font-weight:bold;">FECHA</div><div class="t c" style="left:51.6px;top:167.63px;font-size:10.6px;color:#fff;font-weight:bold;">CIUDAD</div><div class="t c" style="left:138.4px;top:167.63px;font-size:10.6px;color:#fff;font-weight:bold;">VENDEDOR</div><div class="t c" style="left:238.9px;top:167.63px;font-size:10.6px;color:#fff;font-weight:bold;">VENTA</div><div class="r" style="left:92.4px;top:198.9px;width:350.9px;height:1px;background:#93acdc"></div><div class="r" style="left:92.4px;top:217.2px;width:350.9px;height:1px;background:#93acdc"></div><div class="r" style="left:92.4px;top:235.4px;width:350.9px;height:1px;background:#93acdc"></div><div class="r" style="left:92.4px;top:253.6px;width:350.9px;height:1px;background:#93acdc"></div><div class="r" style="left:92.4px;top:271.8px;width:350.9px;height:1px;background:#93acdc"></div><div class="r" style="left:92.4px;top:290.0px;width:350.9px;height:1px;background:#93acdc"></div><div class="r" style="left:92.4px;top:308.3px;width:350.9px;height:1px;background:#93acdc"></div><div class="r" style="left:92.4px;top:326.5px;width:350.9px;height:1px;background:#93acdc"></div><div class="r" style="left:92.4px;top:344.7px;width:350.9px;height:1px;background:#93acdc"></div><div class="r" style="left:92.4px;top:362.9px;width:350.9px;height:1px;background:#93acdc"></div><div class="r" style="left:92.4px;top:381.1px;width:350.9px;height:1px;background:#93acdc"></div><div class="r" style="left:92.4px;top:399.4px;width:350.9px;height:1px;background:#93acdc"></div><div class="r" style="left:92.4px;top:417.6px;width:350.9px;height:1px;background:#93acdc"></div><div class="r" style="left:92.4px;top:435.8px;width:350.9px;height:1px;background:#93acdc"></div><div class="r" style="left:92.4px;top:454.0px;width:350.9px;height:1px;background:#93acdc"></div><div class="r" style="left:92.4px;top:472.2px;width:350.9px;height:1px;background:#93acdc"></div><div class="r" style="left:91.9px;top:163px;width:1px;height:309.74px;background:#a9bde4"></div><div class="r" style="left:442.8px;top:163px;width:1px;height:309.74px;background:#a9bde4"></div><div class="t c" style="left:-23.5px;top:185.81px;font-size:11px;color:#222;font-weight:normal;letter-spacing:0.5px;-webkit-text-stroke:0.15px #222">01/11/2020</div><div class="t c" style="left:51.6px;top:185.81px;font-size:11px;color:#222;font-weight:normal;-webkit-text-stroke:0.15px #222">Lima</div><div class="t c" style="left:138.4px;top:185.81px;font-size:11px;color:#222;font-weight:normal;-webkit-text-stroke:0.15px #222">Robert</div><div class="t c" style="left:238.9px;top:185.81px;font-size:11px;color:#222;font-weight:normal;-webkit-text-stroke:0.15px #222">44.057,00</div><div class="t c" style="left:-23.5px;top:204.03px;font-size:11px;color:#222;font-weight:normal;letter-spacing:0.5px;-webkit-text-stroke:0.15px #222">18/11/2020</div><div class="t c" style="left:51.6px;top:204.03px;font-size:11px;color:#222;font-weight:normal;-webkit-text-stroke:0.15px #222">Lince</div><div class="t c" style="left:138.4px;top:204.03px;font-size:11px;color:#222;font-weight:normal;-webkit-text-stroke:0.15px #222">Mariana</div><div class="t c" style="left:238.9px;top:204.03px;font-size:11px;color:#222;font-weight:normal;-webkit-text-stroke:0.15px #222">33.881,00</div><div class="t c" style="left:-23.5px;top:222.25px;font-size:11px;color:#222;font-weight:normal;letter-spacing:0.5px;-webkit-text-stroke:0.15px #222">04/11/2020</div><div class="t c" style="left:51.6px;top:222.25px;font-size:11px;color:#222;font-weight:normal;-webkit-text-stroke:0.15px #222">San Isidro</div><div class="t c" style="left:138.4px;top:222.25px;font-size:11px;color:#222;font-weight:normal;-webkit-text-stroke:0.15px #222">Danilo</div><div class="t c" style="left:238.9px;top:222.25px;font-size:11px;color:#222;font-weight:normal;-webkit-text-stroke:0.15px #222">42.075,00</div><div class="t c" style="left:-23.5px;top:240.47px;font-size:11px;color:#222;font-weight:normal;letter-spacing:0.5px;-webkit-text-stroke:0.15px #222">10/11/2020</div><div class="t c" style="left:51.6px;top:240.47px;font-size:11px;color:#222;font-weight:normal;-webkit-text-stroke:0.15px #222">Lurigancho</div><div class="t c" style="left:138.4px;top:240.47px;font-size:11px;color:#222;font-weight:normal;-webkit-text-stroke:0.15px #222">Marta</div><div class="t c" style="left:238.9px;top:240.47px;font-size:11px;color:#222;font-weight:normal;-webkit-text-stroke:0.15px #222">34.291,00</div><div class="t c" style="left:-23.5px;top:258.69px;font-size:11px;color:#222;font-weight:normal;letter-spacing:0.5px;-webkit-text-stroke:0.15px #222">22/11/2020</div><div class="t c" style="left:51.6px;top:258.69px;font-size:11px;color:#222;font-weight:normal;-webkit-text-stroke:0.15px #222">Lima</div><div class="t c" style="left:138.4px;top:258.69px;font-size:11px;color:#222;font-weight:normal;-webkit-text-stroke:0.15px #222">Marta</div><div class="t c" style="left:238.9px;top:258.69px;font-size:11px;color:#222;font-weight:normal;-webkit-text-stroke:0.15px #222">35.287,00</div><div class="t c" style="left:-23.5px;top:276.91px;font-size:11px;color:#222;font-weight:normal;letter-spacing:0.5px;-webkit-text-stroke:0.15px #222">26/11/2020</div><div class="t c" style="left:51.6px;top:276.91px;font-size:11px;color:#222;font-weight:normal;-webkit-text-stroke:0.15px #222">Chosica</div><div class="t c" style="left:138.4px;top:276.91px;font-size:11px;color:#222;font-weight:normal;-webkit-text-stroke:0.15px #222">Marta</div><div class="t c" style="left:238.9px;top:276.91px;font-size:11px;color:#222;font-weight:normal;-webkit-text-stroke:0.15px #222">49.593,00</div><div class="t c" style="left:-23.5px;top:295.13px;font-size:11px;color:#222;font-weight:normal;letter-spacing:0.5px;-webkit-text-stroke:0.15px #222">01/12/2020</div><div class="t c" style="left:51.6px;top:295.13px;font-size:11px;color:#222;font-weight:normal;-webkit-text-stroke:0.15px #222">Lima</div><div class="t c" style="left:138.4px;top:295.13px;font-size:11px;color:#222;font-weight:normal;-webkit-text-stroke:0.15px #222">Marcos</div><div class="t c" style="left:238.9px;top:295.13px;font-size:11px;color:#222;font-weight:normal;-webkit-text-stroke:0.15px #222">58.298,00</div><div class="t c" style="left:-23.5px;top:313.35px;font-size:11px;color:#222;font-weight:normal;letter-spacing:0.5px;-webkit-text-stroke:0.15px #222">20/11/2020</div><div class="t c" style="left:51.6px;top:313.35px;font-size:11px;color:#222;font-weight:normal;-webkit-text-stroke:0.15px #222">Lince</div><div class="t c" style="left:138.4px;top:313.35px;font-size:11px;color:#222;font-weight:normal;-webkit-text-stroke:0.15px #222">Danilo</div><div class="t c" style="left:238.9px;top:313.35px;font-size:11px;color:#222;font-weight:normal;-webkit-text-stroke:0.15px #222">49.462,00</div><div class="t c" style="left:-23.5px;top:331.57px;font-size:11px;color:#222;font-weight:normal;letter-spacing:0.5px;-webkit-text-stroke:0.15px #222">05/12/2020</div><div class="t c" style="left:51.6px;top:331.57px;font-size:11px;color:#222;font-weight:normal;-webkit-text-stroke:0.15px #222">Chosica</div><div class="t c" style="left:138.4px;top:331.57px;font-size:11px;color:#222;font-weight:normal;-webkit-text-stroke:0.15px #222">Marcos</div><div class="t c" style="left:238.9px;top:331.57px;font-size:11px;color:#222;font-weight:normal;-webkit-text-stroke:0.15px #222">35.116,00</div><div class="t c" style="left:-23.5px;top:349.79px;font-size:11px;color:#222;font-weight:normal;letter-spacing:0.5px;-webkit-text-stroke:0.15px #222">10/11/2020</div><div class="t c" style="left:51.6px;top:349.79px;font-size:11px;color:#222;font-weight:normal;-webkit-text-stroke:0.15px #222">Lince</div><div class="t c" style="left:138.4px;top:349.79px;font-size:11px;color:#222;font-weight:normal;-webkit-text-stroke:0.15px #222">Robert</div><div class="t c" style="left:238.9px;top:349.79px;font-size:11px;color:#222;font-weight:normal;-webkit-text-stroke:0.15px #222">57.079,00</div><div class="t c" style="left:-23.5px;top:368.01px;font-size:11px;color:#222;font-weight:normal;letter-spacing:0.5px;-webkit-text-stroke:0.15px #222">27/11/2020</div><div class="t c" style="left:51.6px;top:368.01px;font-size:11px;color:#222;font-weight:normal;-webkit-text-stroke:0.15px #222">Lima</div><div class="t c" style="left:138.4px;top:368.01px;font-size:11px;color:#222;font-weight:normal;-webkit-text-stroke:0.15px #222">Mariana</div><div class="t c" style="left:238.9px;top:368.01px;font-size:11px;color:#222;font-weight:normal;-webkit-text-stroke:0.15px #222">41.024,00</div><div class="t c" style="left:-23.5px;top:386.23px;font-size:11px;color:#222;font-weight:normal;letter-spacing:0.5px;-webkit-text-stroke:0.15px #222">27/11/2020</div><div class="t c" style="left:51.6px;top:386.23px;font-size:11px;color:#222;font-weight:normal;-webkit-text-stroke:0.15px #222">Chosica</div><div class="t c" style="left:138.4px;top:386.23px;font-size:11px;color:#222;font-weight:normal;-webkit-text-stroke:0.15px #222">Danilo</div><div class="t c" style="left:238.9px;top:386.23px;font-size:11px;color:#222;font-weight:normal;-webkit-text-stroke:0.15px #222">44.530,00</div><div class="t c" style="left:-23.5px;top:404.45px;font-size:11px;color:#222;font-weight:normal;letter-spacing:0.5px;-webkit-text-stroke:0.15px #222">08/11/2020</div><div class="t c" style="left:51.6px;top:404.45px;font-size:11px;color:#222;font-weight:normal;-webkit-text-stroke:0.15px #222">Lince</div><div class="t c" style="left:138.4px;top:404.45px;font-size:11px;color:#222;font-weight:normal;-webkit-text-stroke:0.15px #222">Danilo</div><div class="t c" style="left:238.9px;top:404.45px;font-size:11px;color:#222;font-weight:normal;-webkit-text-stroke:0.15px #222">34.080,00</div><div class="t c" style="left:-23.5px;top:422.67px;font-size:11px;color:#222;font-weight:normal;letter-spacing:0.5px;-webkit-text-stroke:0.15px #222">29/11/2020</div><div class="t c" style="left:51.6px;top:422.67px;font-size:11px;color:#222;font-weight:normal;-webkit-text-stroke:0.15px #222">Lince</div><div class="t c" style="left:138.4px;top:422.67px;font-size:11px;color:#222;font-weight:normal;-webkit-text-stroke:0.15px #222">Marta</div><div class="t c" style="left:238.9px;top:422.67px;font-size:11px;color:#222;font-weight:normal;-webkit-text-stroke:0.15px #222">54.954,00</div><div class="t c" style="left:-23.5px;top:440.89px;font-size:11px;color:#222;font-weight:normal;letter-spacing:0.5px;-webkit-text-stroke:0.15px #222">04/11/2020</div><div class="t c" style="left:51.6px;top:440.89px;font-size:11px;color:#222;font-weight:normal;-webkit-text-stroke:0.15px #222">Lurigancho</div><div class="t c" style="left:138.4px;top:440.89px;font-size:11px;color:#222;font-weight:normal;-webkit-text-stroke:0.15px #222">Marta</div><div class="t c" style="left:238.9px;top:440.89px;font-size:11px;color:#222;font-weight:normal;-webkit-text-stroke:0.15px #222">32.740,00</div><div class="t c" style="left:-23.5px;top:459.11px;font-size:11px;color:#222;font-weight:normal;letter-spacing:0.5px;-webkit-text-stroke:0.15px #222">25/11/2020</div><div class="t c" style="left:51.6px;top:459.11px;font-size:11px;color:#222;font-weight:normal;-webkit-text-stroke:0.15px #222">Lurigancho</div><div class="t c" style="left:138.4px;top:459.11px;font-size:11px;color:#222;font-weight:normal;-webkit-text-stroke:0.15px #222">Marta</div><div class="t c" style="left:238.9px;top:459.11px;font-size:11px;color:#222;font-weight:normal;-webkit-text-stroke:0.15px #222">30.074,00</div><svg class="r" style="left:439px;top:469px" width="4" height="4" viewBox="0 0 4 4"><path d="M4 0V4H0Z" fill="#4472c4"/></svg><div class="r" style="left:86px;top:156px;width:361.5px;height:319.5px;border:2.2px solid #f00;box-sizing:border-box;border-radius:1.5px"></div><div class="r" style="left:0px;top:517.6px;width:59px;height:2px;background:#cdcdcd"></div><div class="r" style="left:99px;top:517.6px;width:900px;height:2px;background:#cdcdcd"></div><div class="r" style="left:599.5px;top:81px;width:357px;height:450px;background:#fff;border:1px solid #d9d9d9;box-shadow:0 0 2.5px rgba(0,0,0,0.16);box-sizing:border-box"></div><div class="t" style="left:610.3px;top:88.92px;font-size:8.6px;color:#262626;font-weight:bold;">Claro</div><div class="t" style="left:610.5px;top:230.32px;font-size:8.6px;color:#262626;font-weight:bold;">Medio</div><div class="t" style="left:610.4px;top:409.40px;font-size:8.5px;color:#262626;font-weight:bold;">Oscuro</div><div class="r" style="left:600.5px;top:222.5px;width:344px;height:1px;background:#ebebeb"></div><div class="r" style="left:600.5px;top:401px;width:344px;height:1px;background:#ebebeb"></div><div class="r" style="left:600.5px;top:498.5px;width:355px;height:1px;background:#ebebeb"></div><div class="t" style="left:677.0px;top:228.94px;font-size:10.7px;color:#cfcfcf;font-weight:normal;">www.ninjadelexcel.com</div><div class="r" style="left:944.5px;top:84px;width:10.2px;height:414px;background:#f0f0f0"></div><div class="r" style="left:944.5px;top:84px;width:10.2px;height:397px;background:#fff;border:1px solid #999;box-sizing:border-box"></div><div class="r" style="left:944.5px;top:94px;width:10.2px;height:1px;background:#777"></div><svg class="r" style="left:946.5px;top:86.5px" width="6" height="4" viewBox="0 0 6 4"><path d="M0 4L3 0.6L6 4Z" fill="#555"/></svg><div class="r" style="left:944.5px;top:487.2px;width:10.2px;height:10.7px;background:#fff;border:1px solid #999;box-sizing:border-box"></div><svg class="r" style="left:946.5px;top:490.5px" width="6" height="4" viewBox="0 0 6 4"><path d="M0 0L3 3.4L6 0Z" fill="#555"/></svg><svg class="r" style="left:608.3px;top:504px" width="12" height="11" viewBox="0 0 12 11"><rect x="2" y="2.5" width="9.5" height="8" fill="#dbe8f7" stroke="#3b78c2" stroke-width="0.8"/><path d="M2 5.2H11.5M2 7.8H11.5M5.2 2.5V10.5M8.3 2.5V10.5" stroke="#3b78c2" stroke-width="0.7"/><path d="M2.5 0.3V4.3M0.5 2.3H4.5" stroke="#2e9a4c" stroke-width="1"/></svg><div class="t" style="left:626.4px;top:506.89px;font-size:8.4px;color:#333;font-weight:normal;"><u>N</u>uevo estilo de tabla...</div><svg class="r" style="left:603.50px;top:106.4px" width="43.1" height="32" viewBox="0 0 44 32" preserveAspectRatio="none"><rect width="44" height="32" fill="#fff"/><rect x="0" y="6.40" width="44" height="6.40" fill="#D9D9D9"/><rect x="0" y="19.20" width="44" height="6.40" fill="#D9D9D9"/><path d="M0 0.60H44" stroke="#7f7f7f" stroke-width="1.2"/><path d="M0 6.40H44" stroke="#7f7f7f" stroke-width="1.1"/><path d="M0 31.40H44" stroke="#7f7f7f" stroke-width="1.2"/><g opacity="0.8"><path d="M1.9 3.20H42.1" stroke="#595959" stroke-width="1.0" stroke-dasharray="5 3.8"/><path d="M1.9 9.60H42.1" stroke="#595959" stroke-width="1.0" stroke-dasharray="5 3.8"/><path d="M1.9 16.00H42.1" stroke="#595959" stroke-width="1.0" stroke-dasharray="5 3.8"/><path d="M1.9 22.40H42.1" stroke="#595959" stroke-width="1.0" stroke-dasharray="5 3.8"/><path d="M1.9 28.80H42.1" stroke="#595959" stroke-width="1.0" stroke-dasharray="5 3.8"/></g></svg><svg class="r" style="left:652.55px;top:106.4px" width="43.1" height="32" viewBox="0 0 44 32" preserveAspectRatio="none"><rect width="44" height="32" fill="#fff"/><rect x="0" y="6.40" width="44" height="6.40" fill="#D9E1F2"/><rect x="0" y="19.20" width="44" height="6.40" fill="#D9E1F2"/><path d="M0 0.60H44" stroke="#8EA9DB" stroke-width="1.2"/><path d="M0 6.40H44" stroke="#8EA9DB" stroke-width="1.1"/><path d="M0 31.40H44" stroke="#8EA9DB" stroke-width="1.2"/><g opacity="0.8"><path d="M1.9 3.20H42.1" stroke="#4472C4" stroke-width="1.0" stroke-dasharray="5 3.8"/><path d="M1.9 9.60H42.1" stroke="#4472C4" stroke-width="1.0" stroke-dasharray="5 3.8"/><path d="M1.9 16.00H42.1" stroke="#4472C4" stroke-width="1.0" stroke-dasharray="5 3.8"/><path d="M1.9 22.40H42.1" stroke="#4472C4" stroke-width="1.0" stroke-dasharray="5 3.8"/><path d="M1.9 28.80H42.1" stroke="#4472C4" stroke-width="1.0" stroke-dasharray="5 3.8"/></g></svg><svg class="r" style="left:701.60px;top:106.4px" width="43.1" height="32" viewBox="0 0 44 32" preserveAspectRatio="none"><rect width="44" height="32" fill="#fff"/><rect x="0" y="6.40" width="44" height="6.40" fill="#FCE4D6"/><rect x="0" y="19.20" width="44" height="6.40" fill="#FCE4D6"/><path d="M0 0.60H44" stroke="#F4B084" stroke-width="1.2"/><path d="M0 6.40H44" stroke="#F4B084" stroke-width="1.1"/><path d="M0 31.40H44" stroke="#F4B084" stroke-width="1.2"/><g opacity="0.8"><path d="M1.9 3.20H42.1" stroke="#ED7D31" stroke-width="1.0" stroke-dasharray="5 3.8"/><path d="M1.9 9.60H42.1" stroke="#ED7D31" stroke-width="1.0" stroke-dasharray="5 3.8"/><path d="M1.9 16.00H42.1" stroke="#ED7D31" stroke-width="1.0" stroke-dasharray="5 3.8"/><path d="M1.9 22.40H42.1" stroke="#ED7D31" stroke-width="1.0" stroke-dasharray="5 3.8"/><path d="M1.9 28.80H42.1" stroke="#ED7D31" stroke-width="1.0" stroke-dasharray="5 3.8"/></g></svg><svg class="r" style="left:750.65px;top:106.4px" width="43.1" height="32" viewBox="0 0 44 32" preserveAspectRatio="none"><rect width="44" height="32" fill="#fff"/><rect x="0" y="6.40" width="44" height="6.40" fill="#EDEDED"/><rect x="0" y="19.20" width="44" height="6.40" fill="#EDEDED"/><path d="M0 0.60H44" stroke="#C9C9C9" stroke-width="1.2"/><path d="M0 6.40H44" stroke="#C9C9C9" stroke-width="1.1"/><path d="M0 31.40H44" stroke="#C9C9C9" stroke-width="1.2"/><g opacity="0.8"><path d="M1.9 3.20H42.1" stroke="#7F7F7F" stroke-width="1.0" stroke-dasharray="5 3.8"/><path d="M1.9 9.60H42.1" stroke="#7F7F7F" stroke-width="1.0" stroke-dasharray="5 3.8"/><path d="M1.9 16.00H42.1" stroke="#7F7F7F" stroke-width="1.0" stroke-dasharray="5 3.8"/><path d="M1.9 22.40H42.1" stroke="#7F7F7F" stroke-width="1.0" stroke-dasharray="5 3.8"/><path d="M1.9 28.80H42.1" stroke="#7F7F7F" stroke-width="1.0" stroke-dasharray="5 3.8"/></g></svg><svg class="r" style="left:799.70px;top:106.4px" width="43.1" height="32" viewBox="0 0 44 32" preserveAspectRatio="none"><rect width="44" height="32" fill="#fff"/><rect x="0" y="6.40" width="44" height="6.40" fill="#FFF2CC"/><rect x="0" y="19.20" width="44" height="6.40" fill="#FFF2CC"/><path d="M0 0.60H44" stroke="#FFD966" stroke-width="1.2"/><path d="M0 6.40H44" stroke="#FFD966" stroke-width="1.1"/><path d="M0 31.40H44" stroke="#FFD966" stroke-width="1.2"/><g opacity="0.8"><path d="M1.9 3.20H42.1" stroke="#D9A400" stroke-width="1.0" stroke-dasharray="5 3.8"/><path d="M1.9 9.60H42.1" stroke="#D9A400" stroke-width="1.0" stroke-dasharray="5 3.8"/><path d="M1.9 16.00H42.1" stroke="#D9A400" stroke-width="1.0" stroke-dasharray="5 3.8"/><path d="M1.9 22.40H42.1" stroke="#D9A400" stroke-width="1.0" stroke-dasharray="5 3.8"/><path d="M1.9 28.80H42.1" stroke="#D9A400" stroke-width="1.0" stroke-dasharray="5 3.8"/></g></svg><svg class="r" style="left:848.75px;top:106.4px" width="43.1" height="32" viewBox="0 0 44 32" preserveAspectRatio="none"><rect width="44" height="32" fill="#fff"/><rect x="0" y="6.40" width="44" height="6.40" fill="#DDEBF7"/><rect x="0" y="19.20" width="44" height="6.40" fill="#DDEBF7"/><path d="M0 0.60H44" stroke="#9BC2E6" stroke-width="1.2"/><path d="M0 6.40H44" stroke="#9BC2E6" stroke-width="1.1"/><path d="M0 31.40H44" stroke="#9BC2E6" stroke-width="1.2"/><g opacity="0.8"><path d="M1.9 3.20H42.1" stroke="#5B9BD5" stroke-width="1.0" stroke-dasharray="5 3.8"/><path d="M1.9 9.60H42.1" stroke="#5B9BD5" stroke-width="1.0" stroke-dasharray="5 3.8"/><path d="M1.9 16.00H42.1" stroke="#5B9BD5" stroke-width="1.0" stroke-dasharray="5 3.8"/><path d="M1.9 22.40H42.1" stroke="#5B9BD5" stroke-width="1.0" stroke-dasharray="5 3.8"/><path d="M1.9 28.80H42.1" stroke="#5B9BD5" stroke-width="1.0" stroke-dasharray="5 3.8"/></g></svg><svg class="r" style="left:897.80px;top:106.4px" width="43.1" height="32" viewBox="0 0 44 32" preserveAspectRatio="none"><rect width="44" height="32" fill="#fff"/><rect x="0" y="6.40" width="44" height="6.40" fill="#E2EFDA"/><rect x="0" y="19.20" width="44" height="6.40" fill="#E2EFDA"/><path d="M0 0.60H44" stroke="#A9D08E" stroke-width="1.2"/><path d="M0 6.40H44" stroke="#A9D08E" stroke-width="1.1"/><path d="M0 31.40H44" stroke="#A9D08E" stroke-width="1.2"/><g opacity="0.8"><path d="M1.9 3.20H42.1" stroke="#70AD47" stroke-width="1.0" stroke-dasharray="5 3.8"/><path d="M1.9 9.60H42.1" stroke="#70AD47" stroke-width="1.0" stroke-dasharray="5 3.8"/><path d="M1.9 16.00H42.1" stroke="#70AD47" stroke-width="1.0" stroke-dasharray="5 3.8"/><path d="M1.9 22.40H42.1" stroke="#70AD47" stroke-width="1.0" stroke-dasharray="5 3.8"/><path d="M1.9 28.80H42.1" stroke="#70AD47" stroke-width="1.0" stroke-dasharray="5 3.8"/></g></svg><div class="r" style="left:650.3px;top:142.3px;width:46.3px;height:36.4px;background:#d7efdf"></div><svg class="r" style="left:603.50px;top:144.3px" width="43.1" height="32" viewBox="0 0 44 32" preserveAspectRatio="none"><rect width="44" height="32" fill="#fff"/><rect x="0" y="0.00" width="44" height="6.40" fill="#000000"/><path d="M1.9 3.20H42.1" stroke="#ffffff" stroke-width="1.1" stroke-dasharray="5 3.8"/><path d="M0 12.80H44" stroke="#000000" stroke-width="0.55"/><path d="M0 19.20H44" stroke="#000000" stroke-width="0.55"/><path d="M0 25.60H44" stroke="#000000" stroke-width="0.55"/><rect x="0.4" y="0.4" width="43.2" height="31.2" fill="none" stroke="#000000" stroke-width="0.8"/><path d="M1.9 9.60H42.1" stroke="#595959" stroke-width="1.1" stroke-dasharray="5 3.8"/><path d="M1.9 16.00H42.1" stroke="#595959" stroke-width="1.1" stroke-dasharray="5 3.8"/><path d="M1.9 22.40H42.1" stroke="#595959" stroke-width="1.1" stroke-dasharray="5 3.8"/><path d="M1.9 28.80H42.1" stroke="#595959" stroke-width="1.1" stroke-dasharray="5 3.8"/></svg><svg class="r" style="left:652.55px;top:144.3px" width="43.1" height="32" viewBox="0 0 44 32" preserveAspectRatio="none"><rect width="44" height="32" fill="#fff"/><rect x="0" y="0.00" width="44" height="6.40" fill="#4472C4"/><path d="M1.9 3.20H42.1" stroke="#ffffff" stroke-width="1.1" stroke-dasharray="5 3.8"/><path d="M0 12.80H44" stroke="#4472C4" stroke-width="0.55"/><path d="M0 19.20H44" stroke="#4472C4" stroke-width="0.55"/><path d="M0 25.60H44" stroke="#4472C4" stroke-width="0.55"/><rect x="0.4" y="0.4" width="43.2" height="31.2" fill="none" stroke="#4472C4" stroke-width="0.8"/><path d="M1.9 9.60H42.1" stroke="#595959" stroke-width="1.1" stroke-dasharray="5 3.8"/><path d="M1.9 16.00H42.1" stroke="#595959" stroke-width="1.1" stroke-dasharray="5 3.8"/><path d="M1.9 22.40H42.1" stroke="#595959" stroke-width="1.1" stroke-dasharray="5 3.8"/><path d="M1.9 28.80H42.1" stroke="#595959" stroke-width="1.1" stroke-dasharray="5 3.8"/></svg><svg class="r" style="left:701.60px;top:144.3px" width="43.1" height="32" viewBox="0 0 44 32" preserveAspectRatio="none"><rect width="44" height="32" fill="#fff"/><rect x="0" y="0.00" width="44" height="6.40" fill="#ED7D31"/><path d="M1.9 3.20H42.1" stroke="#ffffff" stroke-width="1.1" stroke-dasharray="5 3.8"/><path d="M0 12.80H44" stroke="#ED7D31" stroke-width="0.55"/><path d="M0 19.20H44" stroke="#ED7D31" stroke-width="0.55"/><path d="M0 25.60H44" stroke="#ED7D31" stroke-width="0.55"/><rect x="0.4" y="0.4" width="43.2" height="31.2" fill="none" stroke="#ED7D31" stroke-width="0.8"/><path d="M1.9 9.60H42.1" stroke="#595959" stroke-width="1.1" stroke-dasharray="5 3.8"/><path d="M1.9 16.00H42.1" stroke="#595959" stroke-width="1.1" stroke-dasharray="5 3.8"/><path d="M1.9 22.40H42.1" stroke="#595959" stroke-width="1.1" stroke-dasharray="5 3.8"/><path d="M1.9 28.80H42.1" stroke="#595959" stroke-width="1.1" stroke-dasharray="5 3.8"/></svg><svg class="r" style="left:750.65px;top:144.3px" width="43.1" height="32" viewBox="0 0 44 32" preserveAspectRatio="none"><rect width="44" height="32" fill="#fff"/><rect x="0" y="0.00" width="44" height="6.40" fill="#A5A5A5"/><path d="M1.9 3.20H42.1" stroke="#ffffff" stroke-width="1.1" stroke-dasharray="5 3.8"/><path d="M0 12.80H44" stroke="#A5A5A5" stroke-width="0.55"/><path d="M0 19.20H44" stroke="#A5A5A5" stroke-width="0.55"/><path d="M0 25.60H44" stroke="#A5A5A5" stroke-width="0.55"/><rect x="0.4" y="0.4" width="43.2" height="31.2" fill="none" stroke="#A5A5A5" stroke-width="0.8"/><path d="M1.9 9.60H42.1" stroke="#595959" stroke-width="1.1" stroke-dasharray="5 3.8"/><path d="M1.9 16.00H42.1" stroke="#595959" stroke-width="1.1" stroke-dasharray="5 3.8"/><path d="M1.9 22.40H42.1" stroke="#595959" stroke-width="1.1" stroke-dasharray="5 3.8"/><path d="M1.9 28.80H42.1" stroke="#595959" stroke-width="1.1" stroke-dasharray="5 3.8"/></svg><svg class="r" style="left:799.70px;top:144.3px" width="43.1" height="32" viewBox="0 0 44 32" preserveAspectRatio="none"><rect width="44" height="32" fill="#fff"/><rect x="0" y="0.00" width="44" height="6.40" fill="#FFC000"/><path d="M1.9 3.20H42.1" stroke="#ffffff" stroke-width="1.1" stroke-dasharray="5 3.8"/><path d="M0 12.80H44" stroke="#FFC000" stroke-width="0.55"/><path d="M0 19.20H44" stroke="#FFC000" stroke-width="0.55"/><path d="M0 25.60H44" stroke="#FFC000" stroke-width="0.55"/><rect x="0.4" y="0.4" width="43.2" height="31.2" fill="none" stroke="#FFC000" stroke-width="0.8"/><path d="M1.9 9.60H42.1" stroke="#595959" stroke-width="1.1" stroke-dasharray="5 3.8"/><path d="M1.9 16.00H42.1" stroke="#595959" stroke-width="1.1" stroke-dasharray="5 3.8"/><path d="M1.9 22.40H42.1" stroke="#595959" stroke-width="1.1" stroke-dasharray="5 3.8"/><path d="M1.9 28.80H42.1" stroke="#595959" stroke-width="1.1" stroke-dasharray="5 3.8"/></svg><svg class="r" style="left:848.75px;top:144.3px" width="43.1" height="32" viewBox="0 0 44 32" preserveAspectRatio="none"><rect width="44" height="32" fill="#fff"/><rect x="0" y="0.00" width="44" height="6.40" fill="#5B9BD5"/><path d="M1.9 3.20H42.1" stroke="#ffffff" stroke-width="1.1" stroke-dasharray="5 3.8"/><path d="M0 12.80H44" stroke="#5B9BD5" stroke-width="0.55"/><path d="M0 19.20H44" stroke="#5B9BD5" stroke-width="0.55"/><path d="M0 25.60H44" stroke="#5B9BD5" stroke-width="0.55"/><rect x="0.4" y="0.4" width="43.2" height="31.2" fill="none" stroke="#5B9BD5" stroke-width="0.8"/><path d="M1.9 9.60H42.1" stroke="#595959" stroke-width="1.1" stroke-dasharray="5 3.8"/><path d="M1.9 16.00H42.1" stroke="#595959" stroke-width="1.1" stroke-dasharray="5 3.8"/><path d="M1.9 22.40H42.1" stroke="#595959" stroke-width="1.1" stroke-dasharray="5 3.8"/><path d="M1.9 28.80H42.1" stroke="#595959" stroke-width="1.1" stroke-dasharray="5 3.8"/></svg><svg class="r" style="left:897.80px;top:144.3px" width="43.1" height="32" viewBox="0 0 44 32" preserveAspectRatio="none"><rect width="44" height="32" fill="#fff"/><rect x="0" y="0.00" width="44" height="6.40" fill="#70AD47"/><path d="M1.9 3.20H42.1" stroke="#ffffff" stroke-width="1.1" stroke-dasharray="5 3.8"/><path d="M0 12.80H44" stroke="#70AD47" stroke-width="0.55"/><path d="M0 19.20H44" stroke="#70AD47" stroke-width="0.55"/><path d="M0 25.60H44" stroke="#70AD47" stroke-width="0.55"/><rect x="0.4" y="0.4" width="43.2" height="31.2" fill="none" stroke="#70AD47" stroke-width="0.8"/><path d="M1.9 9.60H42.1" stroke="#595959" stroke-width="1.1" stroke-dasharray="5 3.8"/><path d="M1.9 16.00H42.1" stroke="#595959" stroke-width="1.1" stroke-dasharray="5 3.8"/><path d="M1.9 22.40H42.1" stroke="#595959" stroke-width="1.1" stroke-dasharray="5 3.8"/><path d="M1.9 28.80H42.1" stroke="#595959" stroke-width="1.1" stroke-dasharray="5 3.8"/></svg><svg class="r" style="left:603.50px;top:181.2px" width="43.1" height="32" viewBox="0 0 44 32" preserveAspectRatio="none"><rect width="44" height="32" fill="#fff"/><rect x="0" y="6.40" width="44" height="6.40" fill="#BFBFBF"/><rect x="0" y="19.20" width="44" height="6.40" fill="#BFBFBF"/><path d="M8.80 0V32" stroke="#404040" stroke-width="0.6"/><path d="M17.60 0V32" stroke="#404040" stroke-width="0.6"/><path d="M26.40 0V32" stroke="#404040" stroke-width="0.6"/><path d="M35.20 0V32" stroke="#404040" stroke-width="0.6"/><path d="M0 6.40H44" stroke="#404040" stroke-width="0.6"/><path d="M0 12.80H44" stroke="#404040" stroke-width="0.6"/><path d="M0 19.20H44" stroke="#404040" stroke-width="0.6"/><path d="M0 25.60H44" stroke="#404040" stroke-width="0.6"/><rect x="0.4" y="0.4" width="43.2" height="31.2" fill="none" stroke="#000000" stroke-width="0.8"/><path d="M1.9 3.20H42.1" stroke="#595959" stroke-width="1.1" stroke-dasharray="5 3.8"/><path d="M1.9 9.60H42.1" stroke="#595959" stroke-width="1.1" stroke-dasharray="5 3.8"/><path d="M1.9 16.00H42.1" stroke="#595959" stroke-width="1.1" stroke-dasharray="5 3.8"/><path d="M1.9 22.40H42.1" stroke="#595959" stroke-width="1.1" stroke-dasharray="5 3.8"/><path d="M1.9 28.80H42.1" stroke="#595959" stroke-width="1.1" stroke-dasharray="5 3.8"/></svg><svg class="r" style="left:652.55px;top:181.2px" width="43.1" height="32" viewBox="0 0 44 32" preserveAspectRatio="none"><rect width="44" height="32" fill="#fff"/><rect x="0" y="6.40" width="44" height="6.40" fill="#D9E1F2"/><rect x="0" y="19.20" width="44" height="6.40" fill="#D9E1F2"/><path d="M8.80 0V32" stroke="#8EA9DB" stroke-width="0.6"/><path d="M17.60 0V32" stroke="#8EA9DB" stroke-width="0.6"/><path d="M26.40 0V32" stroke="#8EA9DB" stroke-width="0.6"/><path d="M35.20 0V32" stroke="#8EA9DB" stroke-width="0.6"/><path d="M0 6.40H44" stroke="#8EA9DB" stroke-width="0.6"/><path d="M0 12.80H44" stroke="#8EA9DB" stroke-width="0.6"/><path d="M0 19.20H44" stroke="#8EA9DB" stroke-width="0.6"/><path d="M0 25.60H44" stroke="#8EA9DB" stroke-width="0.6"/><rect x="0.4" y="0.4" width="43.2" height="31.2" fill="none" stroke="#4472C4" stroke-width="0.8"/><path d="M1.9 3.20H42.1" stroke="#595959" stroke-width="1.1" stroke-dasharray="5 3.8"/><path d="M1.9 9.60H42.1" stroke="#595959" stroke-width="1.1" stroke-dasharray="5 3.8"/><path d="M1.9 16.00H42.1" stroke="#595959" stroke-width="1.1" stroke-dasharray="5 3.8"/><path d="M1.9 22.40H42.1" stroke="#595959" stroke-width="1.1" stroke-dasharray="5 3.8"/><path d="M1.9 28.80H42.1" stroke="#595959" stroke-width="1.1" stroke-dasharray="5 3.8"/></svg><svg class="r" style="left:701.60px;top:181.2px" width="43.1" height="32" viewBox="0 0 44 32" preserveAspectRatio="none"><rect width="44" height="32" fill="#fff"/><rect x="0" y="6.40" width="44" height="6.40" fill="#FCE4D6"/><rect x="0" y="19.20" width="44" height="6.40" fill="#FCE4D6"/><path d="M8.80 0V32" stroke="#F4B084" stroke-width="0.6"/><path d="M17.60 0V32" stroke="#F4B084" stroke-width="0.6"/><path d="M26.40 0V32" stroke="#F4B084" stroke-width="0.6"/><path d="M35.20 0V32" stroke="#F4B084" stroke-width="0.6"/><path d="M0 6.40H44" stroke="#F4B084" stroke-width="0.6"/><path d="M0 12.80H44" stroke="#F4B084" stroke-width="0.6"/><path d="M0 19.20H44" stroke="#F4B084" stroke-width="0.6"/><path d="M0 25.60H44" stroke="#F4B084" stroke-width="0.6"/><rect x="0.4" y="0.4" width="43.2" height="31.2" fill="none" stroke="#ED7D31" stroke-width="0.8"/><path d="M1.9 3.20H42.1" stroke="#595959" stroke-width="1.1" stroke-dasharray="5 3.8"/><path d="M1.9 9.60H42.1" stroke="#595959" stroke-width="1.1" stroke-dasharray="5 3.8"/><path d="M1.9 16.00H42.1" stroke="#595959" stroke-width="1.1" stroke-dasharray="5 3.8"/><path d="M1.9 22.40H42.1" stroke="#595959" stroke-width="1.1" stroke-dasharray="5 3.8"/><path d="M1.9 28.80H42.1" stroke="#595959" stroke-width="1.1" stroke-dasharray="5 3.8"/></svg><svg class="r" style="left:750.65px;top:181.2px" width="43.1" height="32" viewBox="0 0 44 32" preserveAspectRatio="none"><rect width="44" height="32" fill="#fff"/><rect x="0" y="6.40" width="44" height="6.40" fill="#EDEDED"/><rect x="0" y="19.20" width="44" height="6.40" fill="#EDEDED"/><path d="M8.80 0V32" stroke="#C9C9C9" stroke-width="0.6"/><path d="M17.60 0V32" stroke="#C9C9C9" stroke-width="0.6"/><path d="M26.40 0V32" stroke="#C9C9C9" stroke-width="0.6"/><path d="M35.20 0V32" stroke="#C9C9C9" stroke-width="0.6"/><path d="M0 6.40H44" stroke="#C9C9C9" stroke-width="0.6"/><path d="M0 12.80H44" stroke="#C9C9C9" stroke-width="0.6"/><path d="M0 19.20H44" stroke="#C9C9C9" stroke-width="0.6"/><path d="M0 25.60H44" stroke="#C9C9C9" stroke-width="0.6"/><rect x="0.4" y="0.4" width="43.2" height="31.2" fill="none" stroke="#A5A5A5" stroke-width="0.8"/><path d="M1.9 3.20H42.1" stroke="#595959" stroke-width="1.1" stroke-dasharray="5 3.8"/><path d="M1.9 9.60H42.1" stroke="#595959" stroke-width="1.1" stroke-dasharray="5 3.8"/><path d="M1.9 16.00H42.1" stroke="#595959" stroke-width="1.1" stroke-dasharray="5 3.8"/><path d="M1.9 22.40H42.1" stroke="#595959" stroke-width="1.1" stroke-dasharray="5 3.8"/><path d="M1.9 28.80H42.1" stroke="#595959" stroke-width="1.1" stroke-dasharray="5 3.8"/></svg><svg class="r" style="left:799.70px;top:181.2px" width="43.1" height="32" viewBox="0 0 44 32" preserveAspectRatio="none"><rect width="44" height="32" fill="#fff"/><rect x="0" y="6.40" width="44" height="6.40" fill="#FFF2CC"/><rect x="0" y="19.20" width="44" height="6.40" fill="#FFF2CC"/><path d="M8.80 0V32" stroke="#FFD966" stroke-width="0.6"/><path d="M17.60 0V32" stroke="#FFD966" stroke-width="0.6"/><path d="M26.40 0V32" stroke="#FFD966" stroke-width="0.6"/><path d="M35.20 0V32" stroke="#FFD966" stroke-width="0.6"/><path d="M0 6.40H44" stroke="#FFD966" stroke-width="0.6"/><path d="M0 12.80H44" stroke="#FFD966" stroke-width="0.6"/><path d="M0 19.20H44" stroke="#FFD966" stroke-width="0.6"/><path d="M0 25.60H44" stroke="#FFD966" stroke-width="0.6"/><rect x="0.4" y="0.4" width="43.2" height="31.2" fill="none" stroke="#FFC000" stroke-width="0.8"/><path d="M1.9 3.20H42.1" stroke="#595959" stroke-width="1.1" stroke-dasharray="5 3.8"/><path d="M1.9 9.60H42.1" stroke="#595959" stroke-width="1.1" stroke-dasharray="5 3.8"/><path d="M1.9 16.00H42.1" stroke="#595959" stroke-width="1.1" stroke-dasharray="5 3.8"/><path d="M1.9 22.40H42.1" stroke="#595959" stroke-width="1.1" stroke-dasharray="5 3.8"/><path d="M1.9 28.80H42.1" stroke="#595959" stroke-width="1.1" stroke-dasharray="5 3.8"/></svg><svg class="r" style="left:848.75px;top:181.2px" width="43.1" height="32" viewBox="0 0 44 32" preserveAspectRatio="none"><rect width="44" height="32" fill="#fff"/><rect x="0" y="6.40" width="44" height="6.40" fill="#DDEBF7"/><rect x="0" y="19.20" width="44" height="6.40" fill="#DDEBF7"/><path d="M8.80 0V32" stroke="#9BC2E6" stroke-width="0.6"/><path d="M17.60 0V32" stroke="#9BC2E6" stroke-width="0.6"/><path d="M26.40 0V32" stroke="#9BC2E6" stroke-width="0.6"/><path d="M35.20 0V32" stroke="#9BC2E6" stroke-width="0.6"/><path d="M0 6.40H44" stroke="#9BC2E6" stroke-width="0.6"/><path d="M0 12.80H44" stroke="#9BC2E6" stroke-width="0.6"/><path d="M0 19.20H44" stroke="#9BC2E6" stroke-width="0.6"/><path d="M0 25.60H44" stroke="#9BC2E6" stroke-width="0.6"/><rect x="0.4" y="0.4" width="43.2" height="31.2" fill="none" stroke="#5B9BD5" stroke-width="0.8"/><path d="M1.9 3.20H42.1" stroke="#595959" stroke-width="1.1" stroke-dasharray="5 3.8"/><path d="M1.9 9.60H42.1" stroke="#595959" stroke-width="1.1" stroke-dasharray="5 3.8"/><path d="M1.9 16.00H42.1" stroke="#595959" stroke-width="1.1" stroke-dasharray="5 3.8"/><path d="M1.9 22.40H42.1" stroke="#595959" stroke-width="1.1" stroke-dasharray="5 3.8"/><path d="M1.9 28.80H42.1" stroke="#595959" stroke-width="1.1" stroke-dasharray="5 3.8"/></svg><svg class="r" style="left:897.80px;top:181.2px" width="43.1" height="32" viewBox="0 0 44 32" preserveAspectRatio="none"><rect width="44" height="32" fill="#fff"/><rect x="0" y="6.40" width="44" height="6.40" fill="#E2EFDA"/><rect x="0" y="19.20" width="44" height="6.40" fill="#E2EFDA"/><path d="M8.80 0V32" stroke="#A9D08E" stroke-width="0.6"/><path d="M17.60 0V32" stroke="#A9D08E" stroke-width="0.6"/><path d="M26.40 0V32" stroke="#A9D08E" stroke-width="0.6"/><path d="M35.20 0V32" stroke="#A9D08E" stroke-width="0.6"/><path d="M0 6.40H44" stroke="#A9D08E" stroke-width="0.6"/><path d="M0 12.80H44" stroke="#A9D08E" stroke-width="0.6"/><path d="M0 19.20H44" stroke="#A9D08E" stroke-width="0.6"/><path d="M0 25.60H44" stroke="#A9D08E" stroke-width="0.6"/><rect x="0.4" y="0.4" width="43.2" height="31.2" fill="none" stroke="#70AD47" stroke-width="0.8"/><path d="M1.9 3.20H42.1" stroke="#595959" stroke-width="1.1" stroke-dasharray="5 3.8"/><path d="M1.9 9.60H42.1" stroke="#595959" stroke-width="1.1" stroke-dasharray="5 3.8"/><path d="M1.9 16.00H42.1" stroke="#595959" stroke-width="1.1" stroke-dasharray="5 3.8"/><path d="M1.9 22.40H42.1" stroke="#595959" stroke-width="1.1" stroke-dasharray="5 3.8"/><path d="M1.9 28.80H42.1" stroke="#595959" stroke-width="1.1" stroke-dasharray="5 3.8"/></svg><svg class="r" style="left:603.50px;top:248px" width="43.1" height="32" viewBox="0 0 44 32" preserveAspectRatio="none"><rect width="44" height="32" fill="#fff"/><rect x="0" y="0.00" width="44" height="6.40" fill="#000000"/><rect x="0" y="6.40" width="44" height="6.40" fill="#D9D9D9"/><rect x="0" y="19.20" width="44" height="6.40" fill="#D9D9D9"/><path d="M0 12.80H44" stroke="#000000" stroke-width="0.7"/><path d="M0 19.20H44" stroke="#000000" stroke-width="0.7"/><path d="M0 25.60H44" stroke="#000000" stroke-width="0.7"/><rect x="0.5" y="0.5" width="43" height="31" fill="none" stroke="#000000" stroke-width="1"/><path d="M1.9 3.20H42.1" stroke="rgba(255,255,255,0.6)" stroke-width="1.1" stroke-dasharray="5 3.8"/><path d="M1.9 9.60H42.1" stroke="#595959" stroke-width="1.1" stroke-dasharray="5 3.8"/><path d="M1.9 16.00H42.1" stroke="#595959" stroke-width="1.1" stroke-dasharray="5 3.8"/><path d="M1.9 22.40H42.1" stroke="#595959" stroke-width="1.1" stroke-dasharray="5 3.8"/><path d="M1.9 28.80H42.1" stroke="#595959" stroke-width="1.1" stroke-dasharray="5 3.8"/></svg><svg class="r" style="left:652.55px;top:248px" width="43.1" height="32" viewBox="0 0 44 32" preserveAspectRatio="none"><rect width="44" height="32" fill="#fff"/><rect x="0" y="0.00" width="44" height="6.40" fill="#4472C4"/><rect x="0" y="6.40" width="44" height="6.40" fill="#D9E1F2"/><rect x="0" y="19.20" width="44" height="6.40" fill="#D9E1F2"/><path d="M0 12.80H44" stroke="#8EA9DB" stroke-width="0.7"/><path d="M0 19.20H44" stroke="#8EA9DB" stroke-width="0.7"/><path d="M0 25.60H44" stroke="#8EA9DB" stroke-width="0.7"/><rect x="0.5" y="0.5" width="43" height="31" fill="none" stroke="#8EA9DB" stroke-width="1"/><path d="M1.9 3.20H42.1" stroke="rgba(255,255,255,0.6)" stroke-width="1.1" stroke-dasharray="5 3.8"/><path d="M1.9 9.60H42.1" stroke="#595959" stroke-width="1.1" stroke-dasharray="5 3.8"/><path d="M1.9 16.00H42.1" stroke="#595959" stroke-width="1.1" stroke-dasharray="5 3.8"/><path d="M1.9 22.40H42.1" stroke="#595959" stroke-width="1.1" stroke-dasharray="5 3.8"/><path d="M1.9 28.80H42.1" stroke="#595959" stroke-width="1.1" stroke-dasharray="5 3.8"/></svg><svg class="r" style="left:701.60px;top:248px" width="43.1" height="32" viewBox="0 0 44 32" preserveAspectRatio="none"><rect width="44" height="32" fill="#fff"/><rect x="0" y="0.00" width="44" height="6.40" fill="#ED7D31"/><rect x="0" y="6.40" width="44" height="6.40" fill="#FCE4D6"/><rect x="0" y="19.20" width="44" height="6.40" fill="#FCE4D6"/><path d="M0 12.80H44" stroke="#F4B084" stroke-width="0.7"/><path d="M0 19.20H44" stroke="#F4B084" stroke-width="0.7"/><path d="M0 25.60H44" stroke="#F4B084" stroke-width="0.7"/><rect x="0.5" y="0.5" width="43" height="31" fill="none" stroke="#F4B084" stroke-width="1"/><path d="M1.9 3.20H42.1" stroke="rgba(255,255,255,0.6)" stroke-width="1.1" stroke-dasharray="5 3.8"/><path d="M1.9 9.60H42.1" stroke="#595959" stroke-width="1.1" stroke-dasharray="5 3.8"/><path d="M1.9 16.00H42.1" stroke="#595959" stroke-width="1.1" stroke-dasharray="5 3.8"/><path d="M1.9 22.40H42.1" stroke="#595959" stroke-width="1.1" stroke-dasharray="5 3.8"/><path d="M1.9 28.80H42.1" stroke="#595959" stroke-width="1.1" stroke-dasharray="5 3.8"/></svg><svg class="r" style="left:750.65px;top:248px" width="43.1" height="32" viewBox="0 0 44 32" preserveAspectRatio="none"><rect width="44" height="32" fill="#fff"/><rect x="0" y="0.00" width="44" height="6.40" fill="#A5A5A5"/><rect x="0" y="6.40" width="44" height="6.40" fill="#EDEDED"/><rect x="0" y="19.20" width="44" height="6.40" fill="#EDEDED"/><path d="M0 12.80H44" stroke="#C9C9C9" stroke-width="0.7"/><path d="M0 19.20H44" stroke="#C9C9C9" stroke-width="0.7"/><path d="M0 25.60H44" stroke="#C9C9C9" stroke-width="0.7"/><rect x="0.5" y="0.5" width="43" height="31" fill="none" stroke="#C9C9C9" stroke-width="1"/><path d="M1.9 3.20H42.1" stroke="rgba(255,255,255,0.6)" stroke-width="1.1" stroke-dasharray="5 3.8"/><path d="M1.9 9.60H42.1" stroke="#595959" stroke-width="1.1" stroke-dasharray="5 3.8"/><path d="M1.9 16.00H42.1" stroke="#595959" stroke-width="1.1" stroke-dasharray="5 3.8"/><path d="M1.9 22.40H42.1" stroke="#595959" stroke-width="1.1" stroke-dasharray="5 3.8"/><path d="M1.9 28.80H42.1" stroke="#595959" stroke-width="1.1" stroke-dasharray="5 3.8"/></svg><svg class="r" style="left:799.70px;top:248px" width="43.1" height="32" viewBox="0 0 44 32" preserveAspectRatio="none"><rect width="44" height="32" fill="#fff"/><rect x="0" y="0.00" width="44" height="6.40" fill="#FFC000"/><rect x="0" y="6.40" width="44" height="6.40" fill="#FFF2CC"/><rect x="0" y="19.20" width="44" height="6.40" fill="#FFF2CC"/><path d="M0 12.80H44" stroke="#FFD966" stroke-width="0.7"/><path d="M0 19.20H44" stroke="#FFD966" stroke-width="0.7"/><path d="M0 25.60H44" stroke="#FFD966" stroke-width="0.7"/><rect x="0.5" y="0.5" width="43" height="31" fill="none" stroke="#FFD966" stroke-width="1"/><path d="M1.9 3.20H42.1" stroke="rgba(255,255,255,0.6)" stroke-width="1.1" stroke-dasharray="5 3.8"/><path d="M1.9 9.60H42.1" stroke="#595959" stroke-width="1.1" stroke-dasharray="5 3.8"/><path d="M1.9 16.00H42.1" stroke="#595959" stroke-width="1.1" stroke-dasharray="5 3.8"/><path d="M1.9 22.40H42.1" stroke="#595959" stroke-width="1.1" stroke-dasharray="5 3.8"/><path d="M1.9 28.80H42.1" stroke="#595959" stroke-width="1.1" stroke-dasharray="5 3.8"/></svg><svg class="r" style="left:848.75px;top:248px" width="43.1" height="32" viewBox="0 0 44 32" preserveAspectRatio="none"><rect width="44" height="32" fill="#fff"/><rect x="0" y="0.00" width="44" height="6.40" fill="#5B9BD5"/><rect x="0" y="6.40" width="44" height="6.40" fill="#DDEBF7"/><rect x="0" y="19.20" width="44" height="6.40" fill="#DDEBF7"/><path d="M0 12.80H44" stroke="#9BC2E6" stroke-width="0.7"/><path d="M0 19.20H44" stroke="#9BC2E6" stroke-width="0.7"/><path d="M0 25.60H44" stroke="#9BC2E6" stroke-width="0.7"/><rect x="0.5" y="0.5" width="43" height="31" fill="none" stroke="#9BC2E6" stroke-width="1"/><path d="M1.9 3.20H42.1" stroke="rgba(255,255,255,0.6)" stroke-width="1.1" stroke-dasharray="5 3.8"/><path d="M1.9 9.60H42.1" stroke="#595959" stroke-width="1.1" stroke-dasharray="5 3.8"/><path d="M1.9 16.00H42.1" stroke="#595959" stroke-width="1.1" stroke-dasharray="5 3.8"/><path d="M1.9 22.40H42.1" stroke="#595959" stroke-width="1.1" stroke-dasharray="5 3.8"/><path d="M1.9 28.80H42.1" stroke="#595959" stroke-width="1.1" stroke-dasharray="5 3.8"/></svg><svg class="r" style="left:897.80px;top:248px" width="43.1" height="32" viewBox="0 0 44 32" preserveAspectRatio="none"><rect width="44" height="32" fill="#fff"/><rect x="0" y="0.00" width="44" height="6.40" fill="#70AD47"/><rect x="0" y="6.40" width="44" height="6.40" fill="#E2EFDA"/><rect x="0" y="19.20" width="44" height="6.40" fill="#E2EFDA"/><path d="M0 12.80H44" stroke="#A9D08E" stroke-width="0.7"/><path d="M0 19.20H44" stroke="#A9D08E" stroke-width="0.7"/><path d="M0 25.60H44" stroke="#A9D08E" stroke-width="0.7"/><rect x="0.5" y="0.5" width="43" height="31" fill="none" stroke="#A9D08E" stroke-width="1"/><path d="M1.9 3.20H42.1" stroke="rgba(255,255,255,0.6)" stroke-width="1.1" stroke-dasharray="5 3.8"/><path d="M1.9 9.60H42.1" stroke="#595959" stroke-width="1.1" stroke-dasharray="5 3.8"/><path d="M1.9 16.00H42.1" stroke="#595959" stroke-width="1.1" stroke-dasharray="5 3.8"/><path d="M1.9 22.40H42.1" stroke="#595959" stroke-width="1.1" stroke-dasharray="5 3.8"/><path d="M1.9 28.80H42.1" stroke="#595959" stroke-width="1.1" stroke-dasharray="5 3.8"/></svg><svg class="r" style="left:603.50px;top:285.0px" width="43.1" height="32" viewBox="0 0 44 32" preserveAspectRatio="none"><rect width="44" height="32" fill="#fff"/><rect x="0" y="0.00" width="44" height="6.40" fill="#000000"/><rect x="0" y="6.40" width="44" height="6.40" fill="#A6A6A6"/><rect x="0" y="12.80" width="44" height="6.40" fill="#D9D9D9"/><rect x="0" y="19.20" width="44" height="6.40" fill="#A6A6A6"/><rect x="0" y="25.60" width="44" height="6.40" fill="#D9D9D9"/><path d="M8.80 0V32" stroke="#ffffff" stroke-width="0.8"/><path d="M17.60 0V32" stroke="#ffffff" stroke-width="0.8"/><path d="M26.40 0V32" stroke="#ffffff" stroke-width="0.8"/><path d="M35.20 0V32" stroke="#ffffff" stroke-width="0.8"/><path d="M0 6.40H44" stroke="#ffffff" stroke-width="0.6"/><path d="M0 12.80H44" stroke="#ffffff" stroke-width="0.6"/><path d="M0 19.20H44" stroke="#ffffff" stroke-width="0.6"/><path d="M0 25.60H44" stroke="#ffffff" stroke-width="0.6"/><path d="M1.9 3.20H42.1" stroke="#ffffff" stroke-width="1.1" stroke-dasharray="5 3.8"/><path d="M1.9 9.60H42.1" stroke="#595959" stroke-width="1.1" stroke-dasharray="5 3.8"/><path d="M1.9 16.00H42.1" stroke="#595959" stroke-width="1.1" stroke-dasharray="5 3.8"/><path d="M1.9 22.40H42.1" stroke="#595959" stroke-width="1.1" stroke-dasharray="5 3.8"/><path d="M1.9 28.80H42.1" stroke="#595959" stroke-width="1.1" stroke-dasharray="5 3.8"/></svg><svg class="r" style="left:652.55px;top:285.0px" width="43.1" height="32" viewBox="0 0 44 32" preserveAspectRatio="none"><rect width="44" height="32" fill="#fff"/><rect x="0" y="0.00" width="44" height="6.40" fill="#4472C4"/><rect x="0" y="6.40" width="44" height="6.40" fill="#B4C6E7"/><rect x="0" y="12.80" width="44" height="6.40" fill="#D9E1F2"/><rect x="0" y="19.20" width="44" height="6.40" fill="#B4C6E7"/><rect x="0" y="25.60" width="44" height="6.40" fill="#D9E1F2"/><path d="M8.80 0V32" stroke="#ffffff" stroke-width="0.8"/><path d="M17.60 0V32" stroke="#ffffff" stroke-width="0.8"/><path d="M26.40 0V32" stroke="#ffffff" stroke-width="0.8"/><path d="M35.20 0V32" stroke="#ffffff" stroke-width="0.8"/><path d="M0 6.40H44" stroke="#ffffff" stroke-width="0.6"/><path d="M0 12.80H44" stroke="#ffffff" stroke-width="0.6"/><path d="M0 19.20H44" stroke="#ffffff" stroke-width="0.6"/><path d="M0 25.60H44" stroke="#ffffff" stroke-width="0.6"/><path d="M1.9 3.20H42.1" stroke="#ffffff" stroke-width="1.1" stroke-dasharray="5 3.8"/><path d="M1.9 9.60H42.1" stroke="#595959" stroke-width="1.1" stroke-dasharray="5 3.8"/><path d="M1.9 16.00H42.1" stroke="#595959" stroke-width="1.1" stroke-dasharray="5 3.8"/><path d="M1.9 22.40H42.1" stroke="#595959" stroke-width="1.1" stroke-dasharray="5 3.8"/><path d="M1.9 28.80H42.1" stroke="#595959" stroke-width="1.1" stroke-dasharray="5 3.8"/></svg><svg class="r" style="left:701.60px;top:285.0px" width="43.1" height="32" viewBox="0 0 44 32" preserveAspectRatio="none"><rect width="44" height="32" fill="#fff"/><rect x="0" y="0.00" width="44" height="6.40" fill="#ED7D31"/><rect x="0" y="6.40" width="44" height="6.40" fill="#F8CBAD"/><rect x="0" y="12.80" width="44" height="6.40" fill="#FCE4D6"/><rect x="0" y="19.20" width="44" height="6.40" fill="#F8CBAD"/><rect x="0" y="25.60" width="44" height="6.40" fill="#FCE4D6"/><path d="M8.80 0V32" stroke="#ffffff" stroke-width="0.8"/><path d="M17.60 0V32" stroke="#ffffff" stroke-width="0.8"/><path d="M26.40 0V32" stroke="#ffffff" stroke-width="0.8"/><path d="M35.20 0V32" stroke="#ffffff" stroke-width="0.8"/><path d="M0 6.40H44" stroke="#ffffff" stroke-width="0.6"/><path d="M0 12.80H44" stroke="#ffffff" stroke-width="0.6"/><path d="M0 19.20H44" stroke="#ffffff" stroke-width="0.6"/><path d="M0 25.60H44" stroke="#ffffff" stroke-width="0.6"/><path d="M1.9 3.20H42.1" stroke="#ffffff" stroke-width="1.1" stroke-dasharray="5 3.8"/><path d="M1.9 9.60H42.1" stroke="#595959" stroke-width="1.1" stroke-dasharray="5 3.8"/><path d="M1.9 16.00H42.1" stroke="#595959" stroke-width="1.1" stroke-dasharray="5 3.8"/><path d="M1.9 22.40H42.1" stroke="#595959" stroke-width="1.1" stroke-dasharray="5 3.8"/><path d="M1.9 28.80H42.1" stroke="#595959" stroke-width="1.1" stroke-dasharray="5 3.8"/></svg><svg class="r" style="left:750.65px;top:285.0px" width="43.1" height="32" viewBox="0 0 44 32" preserveAspectRatio="none"><rect width="44" height="32" fill="#fff"/><rect x="0" y="0.00" width="44" height="6.40" fill="#A5A5A5"/><rect x="0" y="6.40" width="44" height="6.40" fill="#DBDBDB"/><rect x="0" y="12.80" width="44" height="6.40" fill="#EDEDED"/><rect x="0" y="19.20" width="44" height="6.40" fill="#DBDBDB"/><rect x="0" y="25.60" width="44" height="6.40" fill="#EDEDED"/><path d="M8.80 0V32" stroke="#ffffff" stroke-width="0.8"/><path d="M17.60 0V32" stroke="#ffffff" stroke-width="0.8"/><path d="M26.40 0V32" stroke="#ffffff" stroke-width="0.8"/><path d="M35.20 0V32" stroke="#ffffff" stroke-width="0.8"/><path d="M0 6.40H44" stroke="#ffffff" stroke-width="0.6"/><path d="M0 12.80H44" stroke="#ffffff" stroke-width="0.6"/><path d="M0 19.20H44" stroke="#ffffff" stroke-width="0.6"/><path d="M0 25.60H44" stroke="#ffffff" stroke-width="0.6"/><path d="M1.9 3.20H42.1" stroke="#ffffff" stroke-width="1.1" stroke-dasharray="5 3.8"/><path d="M1.9 9.60H42.1" stroke="#595959" stroke-width="1.1" stroke-dasharray="5 3.8"/><path d="M1.9 16.00H42.1" stroke="#595959" stroke-width="1.1" stroke-dasharray="5 3.8"/><path d="M1.9 22.40H42.1" stroke="#595959" stroke-width="1.1" stroke-dasharray="5 3.8"/><path d="M1.9 28.80H42.1" stroke="#595959" stroke-width="1.1" stroke-dasharray="5 3.8"/></svg><svg class="r" style="left:799.70px;top:285.0px" width="43.1" height="32" viewBox="0 0 44 32" preserveAspectRatio="none"><rect width="44" height="32" fill="#fff"/><rect x="0" y="0.00" width="44" height="6.40" fill="#FFC000"/><rect x="0" y="6.40" width="44" height="6.40" fill="#FFE699"/><rect x="0" y="12.80" width="44" height="6.40" fill="#FFF2CC"/><rect x="0" y="19.20" width="44" height="6.40" fill="#FFE699"/><rect x="0" y="25.60" width="44" height="6.40" fill="#FFF2CC"/><path d="M8.80 0V32" stroke="#ffffff" stroke-width="0.8"/><path d="M17.60 0V32" stroke="#ffffff" stroke-width="0.8"/><path d="M26.40 0V32" stroke="#ffffff" stroke-width="0.8"/><path d="M35.20 0V32" stroke="#ffffff" stroke-width="0.8"/><path d="M0 6.40H44" stroke="#ffffff" stroke-width="0.6"/><path d="M0 12.80H44" stroke="#ffffff" stroke-width="0.6"/><path d="M0 19.20H44" stroke="#ffffff" stroke-width="0.6"/><path d="M0 25.60H44" stroke="#ffffff" stroke-width="0.6"/><path d="M1.9 3.20H42.1" stroke="#ffffff" stroke-width="1.1" stroke-dasharray="5 3.8"/><path d="M1.9 9.60H42.1" stroke="#595959" stroke-width="1.1" stroke-dasharray="5 3.8"/><path d="M1.9 16.00H42.1" stroke="#595959" stroke-width="1.1" stroke-dasharray="5 3.8"/><path d="M1.9 22.40H42.1" stroke="#595959" stroke-width="1.1" stroke-dasharray="5 3.8"/><path d="M1.9 28.80H42.1" stroke="#595959" stroke-width="1.1" stroke-dasharray="5 3.8"/></svg><svg class="r" style="left:848.75px;top:285.0px" width="43.1" height="32" viewBox="0 0 44 32" preserveAspectRatio="none"><rect width="44" height="32" fill="#fff"/><rect x="0" y="0.00" width="44" height="6.40" fill="#5B9BD5"/><rect x="0" y="6.40" width="44" height="6.40" fill="#BDD7EE"/><rect x="0" y="12.80" width="44" height="6.40" fill="#DDEBF7"/><rect x="0" y="19.20" width="44" height="6.40" fill="#BDD7EE"/><rect x="0" y="25.60" width="44" height="6.40" fill="#DDEBF7"/><path d="M8.80 0V32" stroke="#ffffff" stroke-width="0.8"/><path d="M17.60 0V32" stroke="#ffffff" stroke-width="0.8"/><path d="M26.40 0V32" stroke="#ffffff" stroke-width="0.8"/><path d="M35.20 0V32" stroke="#ffffff" stroke-width="0.8"/><path d="M0 6.40H44" stroke="#ffffff" stroke-width="0.6"/><path d="M0 12.80H44" stroke="#ffffff" stroke-width="0.6"/><path d="M0 19.20H44" stroke="#ffffff" stroke-width="0.6"/><path d="M0 25.60H44" stroke="#ffffff" stroke-width="0.6"/><path d="M1.9 3.20H42.1" stroke="#ffffff" stroke-width="1.1" stroke-dasharray="5 3.8"/><path d="M1.9 9.60H42.1" stroke="#595959" stroke-width="1.1" stroke-dasharray="5 3.8"/><path d="M1.9 16.00H42.1" stroke="#595959" stroke-width="1.1" stroke-dasharray="5 3.8"/><path d="M1.9 22.40H42.1" stroke="#595959" stroke-width="1.1" stroke-dasharray="5 3.8"/><path d="M1.9 28.80H42.1" stroke="#595959" stroke-width="1.1" stroke-dasharray="5 3.8"/></svg><svg class="r" style="left:897.80px;top:285.0px" width="43.1" height="32" viewBox="0 0 44 32" preserveAspectRatio="none"><rect width="44" height="32" fill="#fff"/><rect x="0" y="0.00" width="44" height="6.40" fill="#70AD47"/><rect x="0" y="6.40" width="44" height="6.40" fill="#C6E0B4"/><rect x="0" y="12.80" width="44" height="6.40" fill="#E2EFDA"/><rect x="0" y="19.20" width="44" height="6.40" fill="#C6E0B4"/><rect x="0" y="25.60" width="44" height="6.40" fill="#E2EFDA"/><path d="M8.80 0V32" stroke="#ffffff" stroke-width="0.8"/><path d="M17.60 0V32" stroke="#ffffff" stroke-width="0.8"/><path d="M26.40 0V32" stroke="#ffffff" stroke-width="0.8"/><path d="M35.20 0V32" stroke="#ffffff" stroke-width="0.8"/><path d="M0 6.40H44" stroke="#ffffff" stroke-width="0.6"/><path d="M0 12.80H44" stroke="#ffffff" stroke-width="0.6"/><path d="M0 19.20H44" stroke="#ffffff" stroke-width="0.6"/><path d="M0 25.60H44" stroke="#ffffff" stroke-width="0.6"/><path d="M1.9 3.20H42.1" stroke="#ffffff" stroke-width="1.1" stroke-dasharray="5 3.8"/><path d="M1.9 9.60H42.1" stroke="#595959" stroke-width="1.1" stroke-dasharray="5 3.8"/><path d="M1.9 16.00H42.1" stroke="#595959" stroke-width="1.1" stroke-dasharray="5 3.8"/><path d="M1.9 22.40H42.1" stroke="#595959" stroke-width="1.1" stroke-dasharray="5 3.8"/><path d="M1.9 28.80H42.1" stroke="#595959" stroke-width="1.1" stroke-dasharray="5 3.8"/></svg><svg class="r" style="left:603.50px;top:323.2px" width="43.1" height="32" viewBox="0 0 44 32" preserveAspectRatio="none"><rect width="44" height="32" fill="#fff"/><rect x="0" y="0.00" width="44" height="6.40" fill="#000000"/><rect x="0" y="6.40" width="44" height="6.40" fill="#BFBFBF"/><rect x="0" y="19.20" width="44" height="6.40" fill="#BFBFBF"/><path d="M8.80 0V32" stroke="#000000" stroke-width="0.7"/><path d="M17.60 0V32" stroke="#000000" stroke-width="0.7"/><path d="M26.40 0V32" stroke="#000000" stroke-width="0.7"/><path d="M35.20 0V32" stroke="#000000" stroke-width="0.7"/><path d="M0 6.40H44" stroke="#000000" stroke-width="0.7"/><path d="M0 12.80H44" stroke="#000000" stroke-width="0.7"/><path d="M0 19.20H44" stroke="#000000" stroke-width="0.7"/><path d="M0 25.60H44" stroke="#000000" stroke-width="0.7"/><rect x="0.5" y="0.5" width="43" height="31" fill="none" stroke="#000000" stroke-width="1"/><path d="M1.9 3.20H42.1" stroke="#ffffff" stroke-width="1.1" stroke-dasharray="5 3.8"/><path d="M1.9 9.60H42.1" stroke="#595959" stroke-width="1.1" stroke-dasharray="5 3.8"/><path d="M1.9 16.00H42.1" stroke="#595959" stroke-width="1.1" stroke-dasharray="5 3.8"/><path d="M1.9 22.40H42.1" stroke="#595959" stroke-width="1.1" stroke-dasharray="5 3.8"/><path d="M1.9 28.80H42.1" stroke="#595959" stroke-width="1.1" stroke-dasharray="5 3.8"/></svg><svg class="r" style="left:652.55px;top:323.2px" width="43.1" height="32" viewBox="0 0 44 32" preserveAspectRatio="none"><rect width="44" height="32" fill="#fff"/><rect x="0" y="0.00" width="44" height="6.40" fill="#4472C4"/><rect x="0" y="6.40" width="44" height="6.40" fill="#D9D9D9"/><rect x="0" y="19.20" width="44" height="6.40" fill="#D9D9D9"/><path d="M0 0.50H44" stroke="#262626" stroke-width="1"/><path d="M0 6.40H44" stroke="#262626" stroke-width="0.9"/><path d="M0 31.40H44" stroke="#404040" stroke-width="1.2"/><path d="M1.9 3.20H42.1" stroke="rgba(255,255,255,0.65)" stroke-width="1.1" stroke-dasharray="5 3.8"/><path d="M1.9 9.60H42.1" stroke="#595959" stroke-width="1.1" stroke-dasharray="5 3.8"/><path d="M1.9 16.00H42.1" stroke="#595959" stroke-width="1.1" stroke-dasharray="5 3.8"/><path d="M1.9 22.40H42.1" stroke="#595959" stroke-width="1.1" stroke-dasharray="5 3.8"/><path d="M1.9 28.80H42.1" stroke="#595959" stroke-width="1.1" stroke-dasharray="5 3.8"/></svg><svg class="r" style="left:701.60px;top:323.2px" width="43.1" height="32" viewBox="0 0 44 32" preserveAspectRatio="none"><rect width="44" height="32" fill="#fff"/><rect x="0" y="0.00" width="44" height="6.40" fill="#ED7D31"/><rect x="0" y="6.40" width="44" height="6.40" fill="#D9D9D9"/><rect x="0" y="19.20" width="44" height="6.40" fill="#D9D9D9"/><path d="M0 0.50H44" stroke="#262626" stroke-width="1"/><path d="M0 6.40H44" stroke="#262626" stroke-width="0.9"/><path d="M0 31.40H44" stroke="#404040" stroke-width="1.2"/><path d="M1.9 3.20H42.1" stroke="rgba(255,255,255,0.65)" stroke-width="1.1" stroke-dasharray="5 3.8"/><path d="M1.9 9.60H42.1" stroke="#595959" stroke-width="1.1" stroke-dasharray="5 3.8"/><path d="M1.9 16.00H42.1" stroke="#595959" stroke-width="1.1" stroke-dasharray="5 3.8"/><path d="M1.9 22.40H42.1" stroke="#595959" stroke-width="1.1" stroke-dasharray="5 3.8"/><path d="M1.9 28.80H42.1" stroke="#595959" stroke-width="1.1" stroke-dasharray="5 3.8"/></svg><svg class="r" style="left:750.65px;top:323.2px" width="43.1" height="32" viewBox="0 0 44 32" preserveAspectRatio="none"><rect width="44" height="32" fill="#fff"/><rect x="0" y="0.00" width="44" height="6.40" fill="#A5A5A5"/><rect x="0" y="6.40" width="44" height="6.40" fill="#D9D9D9"/><rect x="0" y="19.20" width="44" height="6.40" fill="#D9D9D9"/><path d="M0 0.50H44" stroke="#262626" stroke-width="1"/><path d="M0 6.40H44" stroke="#262626" stroke-width="0.9"/><path d="M0 31.40H44" stroke="#404040" stroke-width="1.2"/><path d="M1.9 3.20H42.1" stroke="rgba(255,255,255,0.65)" stroke-width="1.1" stroke-dasharray="5 3.8"/><path d="M1.9 9.60H42.1" stroke="#595959" stroke-width="1.1" stroke-dasharray="5 3.8"/><path d="M1.9 16.00H42.1" stroke="#595959" stroke-width="1.1" stroke-dasharray="5 3.8"/><path d="M1.9 22.40H42.1" stroke="#595959" stroke-width="1.1" stroke-dasharray="5 3.8"/><path d="M1.9 28.80H42.1" stroke="#595959" stroke-width="1.1" stroke-dasharray="5 3.8"/></svg><svg class="r" style="left:799.70px;top:323.2px" width="43.1" height="32" viewBox="0 0 44 32" preserveAspectRatio="none"><rect width="44" height="32" fill="#fff"/><rect x="0" y="0.00" width="44" height="6.40" fill="#FFC000"/><rect x="0" y="6.40" width="44" height="6.40" fill="#D9D9D9"/><rect x="0" y="19.20" width="44" height="6.40" fill="#D9D9D9"/><path d="M0 0.50H44" stroke="#262626" stroke-width="1"/><path d="M0 6.40H44" stroke="#262626" stroke-width="0.9"/><path d="M0 31.40H44" stroke="#404040" stroke-width="1.2"/><path d="M1.9 3.20H42.1" stroke="rgba(255,255,255,0.65)" stroke-width="1.1" stroke-dasharray="5 3.8"/><path d="M1.9 9.60H42.1" stroke="#595959" stroke-width="1.1" stroke-dasharray="5 3.8"/><path d="M1.9 16.00H42.1" stroke="#595959" stroke-width="1.1" stroke-dasharray="5 3.8"/><path d="M1.9 22.40H42.1" stroke="#595959" stroke-width="1.1" stroke-dasharray="5 3.8"/><path d="M1.9 28.80H42.1" stroke="#595959" stroke-width="1.1" stroke-dasharray="5 3.8"/></svg><svg class="r" style="left:848.75px;top:323.2px" width="43.1" height="32" viewBox="0 0 44 32" preserveAspectRatio="none"><rect width="44" height="32" fill="#fff"/><rect x="0" y="0.00" width="44" height="6.40" fill="#5B9BD5"/><rect x="0" y="6.40" width="44" height="6.40" fill="#D9D9D9"/><rect x="0" y="19.20" width="44" height="6.40" fill="#D9D9D9"/><path d="M0 0.50H44" stroke="#262626" stroke-width="1"/><path d="M0 6.40H44" stroke="#262626" stroke-width="0.9"/><path d="M0 31.40H44" stroke="#404040" stroke-width="1.2"/><path d="M1.9 3.20H42.1" stroke="rgba(255,255,255,0.65)" stroke-width="1.1" stroke-dasharray="5 3.8"/><path d="M1.9 9.60H42.1" stroke="#595959" stroke-width="1.1" stroke-dasharray="5 3.8"/><path d="M1.9 16.00H42.1" stroke="#595959" stroke-width="1.1" stroke-dasharray="5 3.8"/><path d="M1.9 22.40H42.1" stroke="#595959" stroke-width="1.1" stroke-dasharray="5 3.8"/><path d="M1.9 28.80H42.1" stroke="#595959" stroke-width="1.1" stroke-dasharray="5 3.8"/></svg><svg class="r" style="left:897.80px;top:323.2px" width="43.1" height="32" viewBox="0 0 44 32" preserveAspectRatio="none"><rect width="44" height="32" fill="#fff"/><rect x="0" y="0.00" width="44" height="6.40" fill="#70AD47"/><rect x="0" y="6.40" width="44" height="6.40" fill="#D9D9D9"/><rect x="0" y="19.20" width="44" height="6.40" fill="#D9D9D9"/><path d="M0 0.50H44" stroke="#262626" stroke-width="1"/><path d="M0 6.40H44" stroke="#262626" stroke-width="0.9"/><path d="M0 31.40H44" stroke="#404040" stroke-width="1.2"/><path d="M1.9 3.20H42.1" stroke="rgba(255,255,255,0.65)" stroke-width="1.1" stroke-dasharray="5 3.8"/><path d="M1.9 9.60H42.1" stroke="#595959" stroke-width="1.1" stroke-dasharray="5 3.8"/><path d="M1.9 16.00H42.1" stroke="#595959" stroke-width="1.1" stroke-dasharray="5 3.8"/><path d="M1.9 22.40H42.1" stroke="#595959" stroke-width="1.1" stroke-dasharray="5 3.8"/><path d="M1.9 28.80H42.1" stroke="#595959" stroke-width="1.1" stroke-dasharray="5 3.8"/></svg><svg class="r" style="left:603.50px;top:360.4px" width="43.1" height="32" viewBox="0 0 44 32" preserveAspectRatio="none"><rect width="44" height="32" fill="#fff"/><rect x="0" y="0.00" width="44" height="6.40" fill="#D9D9D9"/><rect x="0" y="6.40" width="44" height="6.40" fill="#A6A6A6"/><rect x="0" y="12.80" width="44" height="6.40" fill="#D9D9D9"/><rect x="0" y="19.20" width="44" height="6.40" fill="#A6A6A6"/><rect x="0" y="25.60" width="44" height="6.40" fill="#D9D9D9"/><path d="M8.80 0V32" stroke="#595959" stroke-width="0.7"/><path d="M17.60 0V32" stroke="#595959" stroke-width="0.7"/><path d="M26.40 0V32" stroke="#595959" stroke-width="0.7"/><path d="M35.20 0V32" stroke="#595959" stroke-width="0.7"/><path d="M0 6.40H44" stroke="#595959" stroke-width="0.7"/><path d="M0 12.80H44" stroke="#595959" stroke-width="0.7"/><path d="M0 19.20H44" stroke="#595959" stroke-width="0.7"/><path d="M0 25.60H44" stroke="#595959" stroke-width="0.7"/><rect x="0.5" y="0.5" width="43" height="31" fill="none" stroke="#404040" stroke-width="1"/><path d="M1.9 3.20H42.1" stroke="#595959" stroke-width="1.1" stroke-dasharray="5 3.8"/><path d="M1.9 9.60H42.1" stroke="#595959" stroke-width="1.1" stroke-dasharray="5 3.8"/><path d="M1.9 16.00H42.1" stroke="#595959" stroke-width="1.1" stroke-dasharray="5 3.8"/><path d="M1.9 22.40H42.1" stroke="#595959" stroke-width="1.1" stroke-dasharray="5 3.8"/><path d="M1.9 28.80H42.1" stroke="#595959" stroke-width="1.1" stroke-dasharray="5 3.8"/></svg><svg class="r" style="left:652.55px;top:360.4px" width="43.1" height="32" viewBox="0 0 44 32" preserveAspectRatio="none"><rect width="44" height="32" fill="#fff"/><rect x="0" y="0.00" width="44" height="6.40" fill="#D9E1F2"/><rect x="0" y="6.40" width="44" height="6.40" fill="#B4C6E7"/><rect x="0" y="12.80" width="44" height="6.40" fill="#D9E1F2"/><rect x="0" y="19.20" width="44" height="6.40" fill="#B4C6E7"/><rect x="0" y="25.60" width="44" height="6.40" fill="#D9E1F2"/><path d="M8.80 0V32" stroke="#8EA9DB" stroke-width="0.6"/><path d="M17.60 0V32" stroke="#8EA9DB" stroke-width="0.6"/><path d="M26.40 0V32" stroke="#8EA9DB" stroke-width="0.6"/><path d="M35.20 0V32" stroke="#8EA9DB" stroke-width="0.6"/><path d="M0 6.40H44" stroke="#8EA9DB" stroke-width="0.6"/><path d="M0 12.80H44" stroke="#8EA9DB" stroke-width="0.6"/><path d="M0 19.20H44" stroke="#8EA9DB" stroke-width="0.6"/><path d="M0 25.60H44" stroke="#8EA9DB" stroke-width="0.6"/><rect x="0.4" y="0.4" width="43.2" height="31.2" fill="none" stroke="#B4C6E7" stroke-width="0.8"/><path d="M1.9 3.20H42.1" stroke="#595959" stroke-width="1.1" stroke-dasharray="5 3.8"/><path d="M1.9 9.60H42.1" stroke="#595959" stroke-width="1.1" stroke-dasharray="5 3.8"/><path d="M1.9 16.00H42.1" stroke="#595959" stroke-width="1.1" stroke-dasharray="5 3.8"/><path d="M1.9 22.40H42.1" stroke="#595959" stroke-width="1.1" stroke-dasharray="5 3.8"/><path d="M1.9 28.80H42.1" stroke="#595959" stroke-width="1.1" stroke-dasharray="5 3.8"/></svg><svg class="r" style="left:701.60px;top:360.4px" width="43.1" height="32" viewBox="0 0 44 32" preserveAspectRatio="none"><rect width="44" height="32" fill="#fff"/><rect x="0" y="0.00" width="44" height="6.40" fill="#FCE4D6"/><rect x="0" y="6.40" width="44" height="6.40" fill="#F8CBAD"/><rect x="0" y="12.80" width="44" height="6.40" fill="#FCE4D6"/><rect x="0" y="19.20" width="44" height="6.40" fill="#F8CBAD"/><rect x="0" y="25.60" width="44" height="6.40" fill="#FCE4D6"/><path d="M8.80 0V32" stroke="#F4B084" stroke-width="0.6"/><path d="M17.60 0V32" stroke="#F4B084" stroke-width="0.6"/><path d="M26.40 0V32" stroke="#F4B084" stroke-width="0.6"/><path d="M35.20 0V32" stroke="#F4B084" stroke-width="0.6"/><path d="M0 6.40H44" stroke="#F4B084" stroke-width="0.6"/><path d="M0 12.80H44" stroke="#F4B084" stroke-width="0.6"/><path d="M0 19.20H44" stroke="#F4B084" stroke-width="0.6"/><path d="M0 25.60H44" stroke="#F4B084" stroke-width="0.6"/><rect x="0.4" y="0.4" width="43.2" height="31.2" fill="none" stroke="#F8CBAD" stroke-width="0.8"/><path d="M1.9 3.20H42.1" stroke="#595959" stroke-width="1.1" stroke-dasharray="5 3.8"/><path d="M1.9 9.60H42.1" stroke="#595959" stroke-width="1.1" stroke-dasharray="5 3.8"/><path d="M1.9 16.00H42.1" stroke="#595959" stroke-width="1.1" stroke-dasharray="5 3.8"/><path d="M1.9 22.40H42.1" stroke="#595959" stroke-width="1.1" stroke-dasharray="5 3.8"/><path d="M1.9 28.80H42.1" stroke="#595959" stroke-width="1.1" stroke-dasharray="5 3.8"/></svg><svg class="r" style="left:750.65px;top:360.4px" width="43.1" height="32" viewBox="0 0 44 32" preserveAspectRatio="none"><rect width="44" height="32" fill="#fff"/><rect x="0" y="0.00" width="44" height="6.40" fill="#EDEDED"/><rect x="0" y="6.40" width="44" height="6.40" fill="#DBDBDB"/><rect x="0" y="12.80" width="44" height="6.40" fill="#EDEDED"/><rect x="0" y="19.20" width="44" height="6.40" fill="#DBDBDB"/><rect x="0" y="25.60" width="44" height="6.40" fill="#EDEDED"/><path d="M8.80 0V32" stroke="#C9C9C9" stroke-width="0.6"/><path d="M17.60 0V32" stroke="#C9C9C9" stroke-width="0.6"/><path d="M26.40 0V32" stroke="#C9C9C9" stroke-width="0.6"/><path d="M35.20 0V32" stroke="#C9C9C9" stroke-width="0.6"/><path d="M0 6.40H44" stroke="#C9C9C9" stroke-width="0.6"/><path d="M0 12.80H44" stroke="#C9C9C9" stroke-width="0.6"/><path d="M0 19.20H44" stroke="#C9C9C9" stroke-width="0.6"/><path d="M0 25.60H44" stroke="#C9C9C9" stroke-width="0.6"/><rect x="0.4" y="0.4" width="43.2" height="31.2" fill="none" stroke="#DBDBDB" stroke-width="0.8"/><path d="M1.9 3.20H42.1" stroke="#595959" stroke-width="1.1" stroke-dasharray="5 3.8"/><path d="M1.9 9.60H42.1" stroke="#595959" stroke-width="1.1" stroke-dasharray="5 3.8"/><path d="M1.9 16.00H42.1" stroke="#595959" stroke-width="1.1" stroke-dasharray="5 3.8"/><path d="M1.9 22.40H42.1" stroke="#595959" stroke-width="1.1" stroke-dasharray="5 3.8"/><path d="M1.9 28.80H42.1" stroke="#595959" stroke-width="1.1" stroke-dasharray="5 3.8"/></svg><svg class="r" style="left:799.70px;top:360.4px" width="43.1" height="32" viewBox="0 0 44 32" preserveAspectRatio="none"><rect width="44" height="32" fill="#fff"/><rect x="0" y="0.00" width="44" height="6.40" fill="#FFF2CC"/><rect x="0" y="6.40" width="44" height="6.40" fill="#FFE699"/><rect x="0" y="12.80" width="44" height="6.40" fill="#FFF2CC"/><rect x="0" y="19.20" width="44" height="6.40" fill="#FFE699"/><rect x="0" y="25.60" width="44" height="6.40" fill="#FFF2CC"/><path d="M8.80 0V32" stroke="#FFD966" stroke-width="0.6"/><path d="M17.60 0V32" stroke="#FFD966" stroke-width="0.6"/><path d="M26.40 0V32" stroke="#FFD966" stroke-width="0.6"/><path d="M35.20 0V32" stroke="#FFD966" stroke-width="0.6"/><path d="M0 6.40H44" stroke="#FFD966" stroke-width="0.6"/><path d="M0 12.80H44" stroke="#FFD966" stroke-width="0.6"/><path d="M0 19.20H44" stroke="#FFD966" stroke-width="0.6"/><path d="M0 25.60H44" stroke="#FFD966" stroke-width="0.6"/><rect x="0.4" y="0.4" width="43.2" height="31.2" fill="none" stroke="#FFE699" stroke-width="0.8"/><path d="M1.9 3.20H42.1" stroke="#595959" stroke-width="1.1" stroke-dasharray="5 3.8"/><path d="M1.9 9.60H42.1" stroke="#595959" stroke-width="1.1" stroke-dasharray="5 3.8"/><path d="M1.9 16.00H42.1" stroke="#595959" stroke-width="1.1" stroke-dasharray="5 3.8"/><path d="M1.9 22.40H42.1" stroke="#595959" stroke-width="1.1" stroke-dasharray="5 3.8"/><path d="M1.9 28.80H42.1" stroke="#595959" stroke-width="1.1" stroke-dasharray="5 3.8"/></svg><svg class="r" style="left:848.75px;top:360.4px" width="43.1" height="32" viewBox="0 0 44 32" preserveAspectRatio="none"><rect width="44" height="32" fill="#fff"/><rect x="0" y="0.00" width="44" height="6.40" fill="#DDEBF7"/><rect x="0" y="6.40" width="44" height="6.40" fill="#BDD7EE"/><rect x="0" y="12.80" width="44" height="6.40" fill="#DDEBF7"/><rect x="0" y="19.20" width="44" height="6.40" fill="#BDD7EE"/><rect x="0" y="25.60" width="44" height="6.40" fill="#DDEBF7"/><path d="M8.80 0V32" stroke="#9BC2E6" stroke-width="0.6"/><path d="M17.60 0V32" stroke="#9BC2E6" stroke-width="0.6"/><path d="M26.40 0V32" stroke="#9BC2E6" stroke-width="0.6"/><path d="M35.20 0V32" stroke="#9BC2E6" stroke-width="0.6"/><path d="M0 6.40H44" stroke="#9BC2E6" stroke-width="0.6"/><path d="M0 12.80H44" stroke="#9BC2E6" stroke-width="0.6"/><path d="M0 19.20H44" stroke="#9BC2E6" stroke-width="0.6"/><path d="M0 25.60H44" stroke="#9BC2E6" stroke-width="0.6"/><rect x="0.4" y="0.4" width="43.2" height="31.2" fill="none" stroke="#BDD7EE" stroke-width="0.8"/><path d="M1.9 3.20H42.1" stroke="#595959" stroke-width="1.1" stroke-dasharray="5 3.8"/><path d="M1.9 9.60H42.1" stroke="#595959" stroke-width="1.1" stroke-dasharray="5 3.8"/><path d="M1.9 16.00H42.1" stroke="#595959" stroke-width="1.1" stroke-dasharray="5 3.8"/><path d="M1.9 22.40H42.1" stroke="#595959" stroke-width="1.1" stroke-dasharray="5 3.8"/><path d="M1.9 28.80H42.1" stroke="#595959" stroke-width="1.1" stroke-dasharray="5 3.8"/></svg><svg class="r" style="left:897.80px;top:360.4px" width="43.1" height="32" viewBox="0 0 44 32" preserveAspectRatio="none"><rect width="44" height="32" fill="#fff"/><rect x="0" y="0.00" width="44" height="6.40" fill="#E2EFDA"/><rect x="0" y="6.40" width="44" height="6.40" fill="#C6E0B4"/><rect x="0" y="12.80" width="44" height="6.40" fill="#E2EFDA"/><rect x="0" y="19.20" width="44" height="6.40" fill="#C6E0B4"/><rect x="0" y="25.60" width="44" height="6.40" fill="#E2EFDA"/><path d="M8.80 0V32" stroke="#A9D08E" stroke-width="0.6"/><path d="M17.60 0V32" stroke="#A9D08E" stroke-width="0.6"/><path d="M26.40 0V32" stroke="#A9D08E" stroke-width="0.6"/><path d="M35.20 0V32" stroke="#A9D08E" stroke-width="0.6"/><path d="M0 6.40H44" stroke="#A9D08E" stroke-width="0.6"/><path d="M0 12.80H44" stroke="#A9D08E" stroke-width="0.6"/><path d="M0 19.20H44" stroke="#A9D08E" stroke-width="0.6"/><path d="M0 25.60H44" stroke="#A9D08E" stroke-width="0.6"/><rect x="0.4" y="0.4" width="43.2" height="31.2" fill="none" stroke="#C6E0B4" stroke-width="0.8"/><path d="M1.9 3.20H42.1" stroke="#595959" stroke-width="1.1" stroke-dasharray="5 3.8"/><path d="M1.9 9.60H42.1" stroke="#595959" stroke-width="1.1" stroke-dasharray="5 3.8"/><path d="M1.9 16.00H42.1" stroke="#595959" stroke-width="1.1" stroke-dasharray="5 3.8"/><path d="M1.9 22.40H42.1" stroke="#595959" stroke-width="1.1" stroke-dasharray="5 3.8"/><path d="M1.9 28.80H42.1" stroke="#595959" stroke-width="1.1" stroke-dasharray="5 3.8"/></svg><svg class="r" style="left:603.50px;top:426.8px" width="43.1" height="32" viewBox="0 0 44 32" preserveAspectRatio="none"><rect width="44" height="32" fill="#fff"/><rect x="0" y="0.00" width="44" height="6.40" fill="#000000"/><rect x="0" y="6.40" width="44" height="6.40" fill="#404040"/><rect x="0" y="12.80" width="44" height="6.40" fill="#808080"/><rect x="0" y="19.20" width="44" height="6.40" fill="#404040"/><rect x="0" y="25.60" width="44" height="6.40" fill="#808080"/><path d="M0 6.40H44" stroke="#ffffff" stroke-width="0.5"/><path d="M1.9 3.20H42.1" stroke="#bdbdbd" stroke-width="1.1" stroke-dasharray="5 3.8"/><path d="M1.9 9.60H42.1" stroke="#c8c8c8" stroke-width="1.1" stroke-dasharray="5 3.8"/><path d="M1.9 16.00H42.1" stroke="#e8e8e8" stroke-width="1.1" stroke-dasharray="5 3.8"/><path d="M1.9 22.40H42.1" stroke="#d0d0d0" stroke-width="1.1" stroke-dasharray="5 3.8"/><path d="M1.9 28.80H42.1" stroke="#d8d8d8" stroke-width="1.1" stroke-dasharray="5 3.8"/></svg><svg class="r" style="left:652.55px;top:426.8px" width="43.1" height="32" viewBox="0 0 44 32" preserveAspectRatio="none"><rect width="44" height="32" fill="#fff"/><rect x="0" y="0.00" width="44" height="6.40" fill="#000000"/><rect x="0" y="6.40" width="44" height="6.40" fill="#305496"/><rect x="0" y="12.80" width="44" height="6.40" fill="#4472C4"/><rect x="0" y="19.20" width="44" height="6.40" fill="#305496"/><rect x="0" y="25.60" width="44" height="6.40" fill="#4472C4"/><path d="M0 6.40H44" stroke="#ffffff" stroke-width="0.5"/><path d="M1.9 3.20H42.1" stroke="#bdbdbd" stroke-width="1.1" stroke-dasharray="5 3.8"/><path d="M1.9 9.60H42.1" stroke="#c8c8c8" stroke-width="1.1" stroke-dasharray="5 3.8"/><path d="M1.9 16.00H42.1" stroke="#e8e8e8" stroke-width="1.1" stroke-dasharray="5 3.8"/><path d="M1.9 22.40H42.1" stroke="#d0d0d0" stroke-width="1.1" stroke-dasharray="5 3.8"/><path d="M1.9 28.80H42.1" stroke="#d8d8d8" stroke-width="1.1" stroke-dasharray="5 3.8"/></svg><svg class="r" style="left:701.60px;top:426.8px" width="43.1" height="32" viewBox="0 0 44 32" preserveAspectRatio="none"><rect width="44" height="32" fill="#fff"/><rect x="0" y="0.00" width="44" height="6.40" fill="#000000"/><rect x="0" y="6.40" width="44" height="6.40" fill="#C65911"/><rect x="0" y="12.80" width="44" height="6.40" fill="#ED7D31"/><rect x="0" y="19.20" width="44" height="6.40" fill="#C65911"/><rect x="0" y="25.60" width="44" height="6.40" fill="#ED7D31"/><path d="M0 6.40H44" stroke="#ffffff" stroke-width="0.5"/><path d="M1.9 3.20H42.1" stroke="#bdbdbd" stroke-width="1.1" stroke-dasharray="5 3.8"/><path d="M1.9 9.60H42.1" stroke="#c8c8c8" stroke-width="1.1" stroke-dasharray="5 3.8"/><path d="M1.9 16.00H42.1" stroke="#e8e8e8" stroke-width="1.1" stroke-dasharray="5 3.8"/><path d="M1.9 22.40H42.1" stroke="#d0d0d0" stroke-width="1.1" stroke-dasharray="5 3.8"/><path d="M1.9 28.80H42.1" stroke="#d8d8d8" stroke-width="1.1" stroke-dasharray="5 3.8"/></svg><svg class="r" style="left:750.65px;top:426.8px" width="43.1" height="32" viewBox="0 0 44 32" preserveAspectRatio="none"><rect width="44" height="32" fill="#fff"/><rect x="0" y="0.00" width="44" height="6.40" fill="#000000"/><rect x="0" y="6.40" width="44" height="6.40" fill="#7B7B7B"/><rect x="0" y="12.80" width="44" height="6.40" fill="#A5A5A5"/><rect x="0" y="19.20" width="44" height="6.40" fill="#7B7B7B"/><rect x="0" y="25.60" width="44" height="6.40" fill="#A5A5A5"/><path d="M0 6.40H44" stroke="#ffffff" stroke-width="0.5"/><path d="M1.9 3.20H42.1" stroke="#bdbdbd" stroke-width="1.1" stroke-dasharray="5 3.8"/><path d="M1.9 9.60H42.1" stroke="#c8c8c8" stroke-width="1.1" stroke-dasharray="5 3.8"/><path d="M1.9 16.00H42.1" stroke="#e8e8e8" stroke-width="1.1" stroke-dasharray="5 3.8"/><path d="M1.9 22.40H42.1" stroke="#d0d0d0" stroke-width="1.1" stroke-dasharray="5 3.8"/><path d="M1.9 28.80H42.1" stroke="#d8d8d8" stroke-width="1.1" stroke-dasharray="5 3.8"/></svg><svg class="r" style="left:799.70px;top:426.8px" width="43.1" height="32" viewBox="0 0 44 32" preserveAspectRatio="none"><rect width="44" height="32" fill="#fff"/><rect x="0" y="0.00" width="44" height="6.40" fill="#000000"/><rect x="0" y="6.40" width="44" height="6.40" fill="#BF8F00"/><rect x="0" y="12.80" width="44" height="6.40" fill="#FFC000"/><rect x="0" y="19.20" width="44" height="6.40" fill="#BF8F00"/><rect x="0" y="25.60" width="44" height="6.40" fill="#FFC000"/><path d="M0 6.40H44" stroke="#ffffff" stroke-width="0.5"/><path d="M1.9 3.20H42.1" stroke="#bdbdbd" stroke-width="1.1" stroke-dasharray="5 3.8"/><path d="M1.9 9.60H42.1" stroke="#c8c8c8" stroke-width="1.1" stroke-dasharray="5 3.8"/><path d="M1.9 16.00H42.1" stroke="#e8e8e8" stroke-width="1.1" stroke-dasharray="5 3.8"/><path d="M1.9 22.40H42.1" stroke="#d0d0d0" stroke-width="1.1" stroke-dasharray="5 3.8"/><path d="M1.9 28.80H42.1" stroke="#d8d8d8" stroke-width="1.1" stroke-dasharray="5 3.8"/></svg><svg class="r" style="left:848.75px;top:426.8px" width="43.1" height="32" viewBox="0 0 44 32" preserveAspectRatio="none"><rect width="44" height="32" fill="#fff"/><rect x="0" y="0.00" width="44" height="6.40" fill="#000000"/><rect x="0" y="6.40" width="44" height="6.40" fill="#2F75B5"/><rect x="0" y="12.80" width="44" height="6.40" fill="#5B9BD5"/><rect x="0" y="19.20" width="44" height="6.40" fill="#2F75B5"/><rect x="0" y="25.60" width="44" height="6.40" fill="#5B9BD5"/><path d="M0 6.40H44" stroke="#ffffff" stroke-width="0.5"/><path d="M1.9 3.20H42.1" stroke="#bdbdbd" stroke-width="1.1" stroke-dasharray="5 3.8"/><path d="M1.9 9.60H42.1" stroke="#c8c8c8" stroke-width="1.1" stroke-dasharray="5 3.8"/><path d="M1.9 16.00H42.1" stroke="#e8e8e8" stroke-width="1.1" stroke-dasharray="5 3.8"/><path d="M1.9 22.40H42.1" stroke="#d0d0d0" stroke-width="1.1" stroke-dasharray="5 3.8"/><path d="M1.9 28.80H42.1" stroke="#d8d8d8" stroke-width="1.1" stroke-dasharray="5 3.8"/></svg><svg class="r" style="left:897.80px;top:426.8px" width="43.1" height="32" viewBox="0 0 44 32" preserveAspectRatio="none"><rect width="44" height="32" fill="#fff"/><rect x="0" y="0.00" width="44" height="6.40" fill="#000000"/><rect x="0" y="6.40" width="44" height="6.40" fill="#548235"/><rect x="0" y="12.80" width="44" height="6.40" fill="#70AD47"/><rect x="0" y="19.20" width="44" height="6.40" fill="#548235"/><rect x="0" y="25.60" width="44" height="6.40" fill="#70AD47"/><path d="M0 6.40H44" stroke="#ffffff" stroke-width="0.5"/><path d="M1.9 3.20H42.1" stroke="#bdbdbd" stroke-width="1.1" stroke-dasharray="5 3.8"/><path d="M1.9 9.60H42.1" stroke="#c8c8c8" stroke-width="1.1" stroke-dasharray="5 3.8"/><path d="M1.9 16.00H42.1" stroke="#e8e8e8" stroke-width="1.1" stroke-dasharray="5 3.8"/><path d="M1.9 22.40H42.1" stroke="#d0d0d0" stroke-width="1.1" stroke-dasharray="5 3.8"/><path d="M1.9 28.80H42.1" stroke="#d8d8d8" stroke-width="1.1" stroke-dasharray="5 3.8"/></svg><svg class="r" style="left:603.50px;top:464.4px" width="43.1" height="32" viewBox="0 0 44 32" preserveAspectRatio="none"><rect width="44" height="32" fill="#fff"/><rect x="0" y="0.00" width="44" height="6.40" fill="#000000"/><rect x="0" y="6.40" width="44" height="6.40" fill="#A6A6A6"/><rect x="0" y="12.80" width="44" height="6.40" fill="#D9D9D9"/><rect x="0" y="19.20" width="44" height="6.40" fill="#A6A6A6"/><rect x="0" y="25.60" width="44" height="6.40" fill="#D9D9D9"/><path d="M1.9 3.20H42.1" stroke="#ffffff" stroke-width="1.1" stroke-dasharray="5 3.8"/><path d="M1.9 9.60H42.1" stroke="#595959" stroke-width="1.1" stroke-dasharray="5 3.8"/><path d="M1.9 16.00H42.1" stroke="#595959" stroke-width="1.1" stroke-dasharray="5 3.8"/><path d="M1.9 22.40H42.1" stroke="#595959" stroke-width="1.1" stroke-dasharray="5 3.8"/><path d="M1.9 28.80H42.1" stroke="#595959" stroke-width="1.1" stroke-dasharray="5 3.8"/></svg><svg class="r" style="left:652.55px;top:464.4px" width="43.1" height="32" viewBox="0 0 44 32" preserveAspectRatio="none"><rect width="44" height="32" fill="#fff"/><rect x="0" y="0.00" width="44" height="6.40" fill="#ED7D31"/><rect x="0" y="6.40" width="44" height="6.40" fill="#B4C6E7"/><rect x="0" y="12.80" width="44" height="6.40" fill="#D9E1F2"/><rect x="0" y="19.20" width="44" height="6.40" fill="#B4C6E7"/><rect x="0" y="25.60" width="44" height="6.40" fill="#D9E1F2"/><path d="M1.9 3.20H42.1" stroke="#ffffff" stroke-width="1.1" stroke-dasharray="5 3.8"/><path d="M1.9 9.60H42.1" stroke="#595959" stroke-width="1.1" stroke-dasharray="5 3.8"/><path d="M1.9 16.00H42.1" stroke="#595959" stroke-width="1.1" stroke-dasharray="5 3.8"/><path d="M1.9 22.40H42.1" stroke="#595959" stroke-width="1.1" stroke-dasharray="5 3.8"/><path d="M1.9 28.80H42.1" stroke="#595959" stroke-width="1.1" stroke-dasharray="5 3.8"/></svg><svg class="r" style="left:701.60px;top:464.4px" width="43.1" height="32" viewBox="0 0 44 32" preserveAspectRatio="none"><rect width="44" height="32" fill="#fff"/><rect x="0" y="0.00" width="44" height="6.40" fill="#FFC000"/><rect x="0" y="6.40" width="44" height="6.40" fill="#C9C9C9"/><rect x="0" y="12.80" width="44" height="6.40" fill="#EDEDED"/><rect x="0" y="19.20" width="44" height="6.40" fill="#C9C9C9"/><rect x="0" y="25.60" width="44" height="6.40" fill="#EDEDED"/><path d="M1.9 3.20H42.1" stroke="#ffffff" stroke-width="1.1" stroke-dasharray="5 3.8"/><path d="M1.9 9.60H42.1" stroke="#595959" stroke-width="1.1" stroke-dasharray="5 3.8"/><path d="M1.9 16.00H42.1" stroke="#595959" stroke-width="1.1" stroke-dasharray="5 3.8"/><path d="M1.9 22.40H42.1" stroke="#595959" stroke-width="1.1" stroke-dasharray="5 3.8"/><path d="M1.9 28.80H42.1" stroke="#595959" stroke-width="1.1" stroke-dasharray="5 3.8"/></svg><svg class="r" style="left:750.65px;top:464.4px" width="43.1" height="32" viewBox="0 0 44 32" preserveAspectRatio="none"><rect width="44" height="32" fill="#fff"/><rect x="0" y="0.00" width="44" height="6.40" fill="#70AD47"/><rect x="0" y="6.40" width="44" height="6.40" fill="#BDD7EE"/><rect x="0" y="12.80" width="44" height="6.40" fill="#DDEBF7"/><rect x="0" y="19.20" width="44" height="6.40" fill="#BDD7EE"/><rect x="0" y="25.60" width="44" height="6.40" fill="#DDEBF7"/><path d="M1.9 3.20H42.1" stroke="#ffffff" stroke-width="1.1" stroke-dasharray="5 3.8"/><path d="M1.9 9.60H42.1" stroke="#595959" stroke-width="1.1" stroke-dasharray="5 3.8"/><path d="M1.9 16.00H42.1" stroke="#595959" stroke-width="1.1" stroke-dasharray="5 3.8"/><path d="M1.9 22.40H42.1" stroke="#595959" stroke-width="1.1" stroke-dasharray="5 3.8"/><path d="M1.9 28.80H42.1" stroke="#595959" stroke-width="1.1" stroke-dasharray="5 3.8"/></svg><svg class="r" style="left:679.5px;top:163px" width="9" height="14" viewBox="0 0 9 14"><path d="M0.6 0.6V11.6L3.2 9.2L5 13.2L6.8 12.4L5 8.6H8.4Z" fill="#fff" stroke="#333" stroke-width="0.8" stroke-linejoin="round"/></svg><div class="r" style="left:679.6px;top:177.1px;width:108.7px;height:17px;background:#fff;border:1px solid #cfcfcf;border-radius:2px;box-shadow:1px 1px 2px rgba(0,0,0,0.15);box-sizing:border-box"></div><div class="t" style="left:682.7px;top:181.80px;font-size:8.5px;color:#666;font-weight:normal;">Azul, Estilo de tabla claro 9</div><div class="r" style="left:647.2px;top:140.3px;width:51.8px;height:42.7px;border:2.4px solid #f00;box-sizing:border-box;border-radius:1px"></div><div class="r" style="left:595.5px;top:19.4px;width:61.3px;height:65.4px;border:2.2px solid #f00;box-sizing:border-box;border-radius:1px"></div>
</body></html>
